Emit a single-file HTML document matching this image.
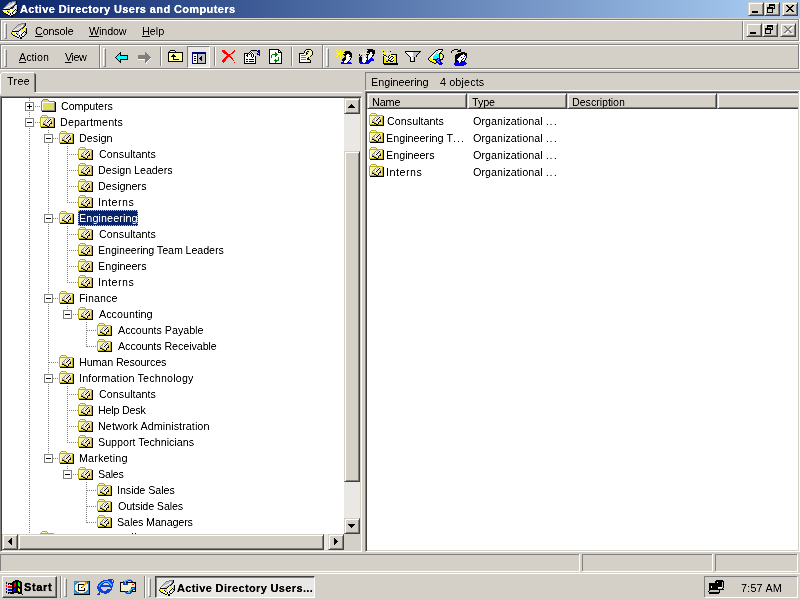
<!DOCTYPE html>
<html><head><meta charset="utf-8"><style>
html,body{margin:0;padding:0;width:800px;height:600px;overflow:hidden;background:#d4d0c8}
.t{position:absolute;white-space:nowrap;font-family:"Liberation Sans",sans-serif;font-size:10.8px;line-height:16px;color:#000;filter:url(#crisp)}
u{text-decoration:underline}
svg{display:block}
</style></head><body>
<svg width="0" height="0" style="position:absolute"><symbol id="folder" viewBox="0 0 17 15"><rect x="4" y="1" width="5" height="1" fill="#808080"/><rect x="3" y="2" width="1" height="1" fill="#808080"/><rect x="4" y="2" width="5" height="1" fill="#e0dc60"/><rect x="9" y="2" width="1" height="1" fill="#808080"/><rect x="2" y="3" width="1" height="1" fill="#808080"/><rect x="3" y="3" width="7" height="1" fill="#e0dc60"/><rect x="10" y="3" width="6" height="1" fill="#808080"/><rect x="2" y="4" width="1" height="1" fill="#808080"/><rect x="3" y="4" width="12" height="1" fill="#ffffff"/><rect x="15" y="4" width="1" height="1" fill="#808080"/><rect x="16" y="4" width="1" height="1" fill="#000000"/><rect x="2" y="5" width="1" height="1" fill="#808080"/><rect x="3" y="5" width="1" height="1" fill="#ffffff"/><rect x="4" y="5" width="11" height="1" fill="#e0dc60"/><rect x="15" y="5" width="1" height="1" fill="#808080"/><rect x="16" y="5" width="1" height="1" fill="#000000"/><rect x="2" y="6" width="1" height="1" fill="#808080"/><rect x="3" y="6" width="1" height="1" fill="#ffffff"/><rect x="4" y="6" width="11" height="1" fill="#e0dc60"/><rect x="15" y="6" width="1" height="1" fill="#808080"/><rect x="16" y="6" width="1" height="1" fill="#000000"/><rect x="2" y="7" width="1" height="1" fill="#808080"/><rect x="3" y="7" width="1" height="1" fill="#ffffff"/><rect x="4" y="7" width="11" height="1" fill="#e0dc60"/><rect x="15" y="7" width="1" height="1" fill="#808080"/><rect x="16" y="7" width="1" height="1" fill="#000000"/><rect x="2" y="8" width="1" height="1" fill="#808080"/><rect x="3" y="8" width="1" height="1" fill="#ffffff"/><rect x="4" y="8" width="11" height="1" fill="#e0dc60"/><rect x="15" y="8" width="1" height="1" fill="#808080"/><rect x="16" y="8" width="1" height="1" fill="#000000"/><rect x="2" y="9" width="1" height="1" fill="#808080"/><rect x="3" y="9" width="1" height="1" fill="#ffffff"/><rect x="4" y="9" width="11" height="1" fill="#e0dc60"/><rect x="15" y="9" width="1" height="1" fill="#808080"/><rect x="16" y="9" width="1" height="1" fill="#000000"/><rect x="2" y="10" width="1" height="1" fill="#808080"/><rect x="3" y="10" width="1" height="1" fill="#ffffff"/><rect x="4" y="10" width="11" height="1" fill="#e0dc60"/><rect x="15" y="10" width="1" height="1" fill="#808080"/><rect x="16" y="10" width="1" height="1" fill="#000000"/><rect x="2" y="11" width="1" height="1" fill="#808080"/><rect x="3" y="11" width="1" height="1" fill="#ffffff"/><rect x="4" y="11" width="11" height="1" fill="#e0dc60"/><rect x="15" y="11" width="1" height="1" fill="#808080"/><rect x="16" y="11" width="1" height="1" fill="#000000"/><rect x="2" y="12" width="14" height="1" fill="#808080"/><rect x="16" y="12" width="1" height="1" fill="#000000"/><rect x="3" y="13" width="14" height="1" fill="#000000"/></symbol><symbol id="ou" viewBox="0 0 16 16"><rect x="3" y="1" width="5" height="1" fill="#b8b018"/><rect x="2" y="2" width="1" height="1" fill="#b8b018"/><rect x="3" y="2" width="2" height="1" fill="#ffffff"/><rect x="5" y="2" width="3" height="1" fill="#f8f4a0"/><rect x="8" y="2" width="1" height="1" fill="#b8b018"/><rect x="1" y="3" width="14" height="1" fill="#b8b018"/><rect x="1" y="4" width="1" height="1" fill="#b8b018"/><rect x="2" y="4" width="1" height="1" fill="#fffcd0"/><rect x="3" y="4" width="5" height="1" fill="#f8f4a0"/><rect x="8" y="4" width="3" height="1" fill="#c0c0c0"/><rect x="11" y="4" width="3" height="1" fill="#f8f4a0"/><rect x="14" y="4" width="1" height="1" fill="#b8b018"/><rect x="15" y="4" width="1" height="1" fill="#000000"/><rect x="1" y="5" width="1" height="1" fill="#b8b018"/><rect x="2" y="5" width="1" height="1" fill="#fffcd0"/><rect x="3" y="5" width="4" height="1" fill="#f8f4a0"/><rect x="7" y="5" width="1" height="1" fill="#808080"/><rect x="8" y="5" width="1" height="1" fill="#ffffff"/><rect x="9" y="5" width="1" height="1" fill="#c0c0c0"/><rect x="10" y="5" width="1" height="1" fill="#ffffff"/><rect x="11" y="5" width="1" height="1" fill="#000000"/><rect x="12" y="5" width="1" height="1" fill="#f8d0a0"/><rect x="13" y="5" width="1" height="1" fill="#f8f4a0"/><rect x="14" y="5" width="1" height="1" fill="#b8b018"/><rect x="15" y="5" width="1" height="1" fill="#000000"/><rect x="1" y="6" width="1" height="1" fill="#b8b018"/><rect x="2" y="6" width="1" height="1" fill="#fffcd0"/><rect x="3" y="6" width="3" height="1" fill="#f8f4a0"/><rect x="6" y="6" width="1" height="1" fill="#808080"/><rect x="7" y="6" width="1" height="1" fill="#ffffff"/><rect x="8" y="6" width="1" height="1" fill="#c0c0c0"/><rect x="9" y="6" width="1" height="1" fill="#ffffff"/><rect x="10" y="6" width="1" height="1" fill="#000000"/><rect x="11" y="6" width="1" height="1" fill="#f8f4a0"/><rect x="12" y="6" width="2" height="1" fill="#f8d0a0"/><rect x="14" y="6" width="1" height="1" fill="#b8b018"/><rect x="15" y="6" width="1" height="1" fill="#000000"/><rect x="1" y="7" width="1" height="1" fill="#b8b018"/><rect x="2" y="7" width="1" height="1" fill="#fffcd0"/><rect x="3" y="7" width="2" height="1" fill="#f8f4a0"/><rect x="5" y="7" width="1" height="1" fill="#808080"/><rect x="6" y="7" width="1" height="1" fill="#c0c0c0"/><rect x="7" y="7" width="2" height="1" fill="#ffffff"/><rect x="9" y="7" width="1" height="1" fill="#000000"/><rect x="10" y="7" width="1" height="1" fill="#f8f4a0"/><rect x="11" y="7" width="1" height="1" fill="#c0c0c0"/><rect x="12" y="7" width="1" height="1" fill="#808080"/><rect x="13" y="7" width="1" height="1" fill="#f8d0a0"/><rect x="14" y="7" width="1" height="1" fill="#b8b018"/><rect x="15" y="7" width="1" height="1" fill="#000000"/><rect x="1" y="8" width="1" height="1" fill="#b8b018"/><rect x="2" y="8" width="1" height="1" fill="#fffcd0"/><rect x="3" y="8" width="1" height="1" fill="#f8f4a0"/><rect x="4" y="8" width="1" height="1" fill="#808080"/><rect x="5" y="8" width="1" height="1" fill="#ffffff"/><rect x="6" y="8" width="1" height="1" fill="#c0c0c0"/><rect x="7" y="8" width="1" height="1" fill="#ffffff"/><rect x="8" y="8" width="1" height="1" fill="#000000"/><rect x="9" y="8" width="1" height="1" fill="#f8f4a0"/><rect x="10" y="8" width="2" height="1" fill="#ffffff"/><rect x="12" y="8" width="1" height="1" fill="#000000"/><rect x="13" y="8" width="1" height="1" fill="#f8d0a0"/><rect x="14" y="8" width="1" height="1" fill="#b8b018"/><rect x="15" y="8" width="1" height="1" fill="#000000"/><rect x="1" y="9" width="1" height="1" fill="#b8b018"/><rect x="2" y="9" width="1" height="1" fill="#fffcd0"/><rect x="3" y="9" width="1" height="1" fill="#f8f4a0"/><rect x="4" y="9" width="1" height="1" fill="#808080"/><rect x="5" y="9" width="1" height="1" fill="#b8b018"/><rect x="6" y="9" width="2" height="1" fill="#f8d0a0"/><rect x="8" y="9" width="1" height="1" fill="#f8f4a0"/><rect x="9" y="9" width="1" height="1" fill="#c0c0c0"/><rect x="10" y="9" width="1" height="1" fill="#ffffff"/><rect x="11" y="9" width="2" height="1" fill="#000000"/><rect x="13" y="9" width="1" height="1" fill="#f8d0a0"/><rect x="14" y="9" width="1" height="1" fill="#b8b018"/><rect x="15" y="9" width="1" height="1" fill="#000000"/><rect x="1" y="10" width="1" height="1" fill="#b8b018"/><rect x="2" y="10" width="1" height="1" fill="#fffcd0"/><rect x="3" y="10" width="1" height="1" fill="#f8f4a0"/><rect x="4" y="10" width="2" height="1" fill="#000000"/><rect x="6" y="10" width="1" height="1" fill="#b8b018"/><rect x="7" y="10" width="1" height="1" fill="#f8d0a0"/><rect x="8" y="10" width="1" height="1" fill="#f8f4a0"/><rect x="9" y="10" width="1" height="1" fill="#ffffff"/><rect x="10" y="10" width="1" height="1" fill="#000000"/><rect x="11" y="10" width="3" height="1" fill="#f8d0a0"/><rect x="14" y="10" width="1" height="1" fill="#b8b018"/><rect x="15" y="10" width="1" height="1" fill="#000000"/><rect x="1" y="11" width="1" height="1" fill="#b8b018"/><rect x="2" y="11" width="1" height="1" fill="#fffcd0"/><rect x="3" y="11" width="1" height="1" fill="#f8d0a0"/><rect x="4" y="11" width="2" height="1" fill="#f8f4a0"/><rect x="6" y="11" width="2" height="1" fill="#000000"/><rect x="8" y="11" width="1" height="1" fill="#b8b018"/><rect x="9" y="11" width="1" height="1" fill="#ffffff"/><rect x="10" y="11" width="1" height="1" fill="#000000"/><rect x="11" y="11" width="2" height="1" fill="#f8d0a0"/><rect x="13" y="11" width="1" height="1" fill="#f8f4a0"/><rect x="14" y="11" width="1" height="1" fill="#b8b018"/><rect x="15" y="11" width="1" height="1" fill="#000000"/><rect x="1" y="12" width="7" height="1" fill="#b8b018"/><rect x="8" y="12" width="2" height="1" fill="#000000"/><rect x="10" y="12" width="5" height="1" fill="#b8b018"/><rect x="15" y="12" width="1" height="1" fill="#000000"/><rect x="2" y="13" width="14" height="1" fill="#000000"/></symbol><filter id="crisp" x="0" y="0" width="100%" height="100%"><feComponentTransfer><feFuncA type="table" tableValues="0 0.08 0.5 0.95 1"/></feComponentTransfer></filter></svg>
<div style="position:absolute;left:0px;top:0px;width:800px;height:18px;background:linear-gradient(to right,#0a246a 0px,#a6caf0 770px)"></div><div style="position:absolute;left:0px;top:18px;width:800px;height:1px;background:#d4d0c8"></div><div class="t" style="left:20px;top:2px;color:#fff;font-weight:bold;font-size:11px;line-height:14px;letter-spacing:0.38px;-webkit-text-stroke:0.2px #fff">Active Directory Users and Computers</div><div style="position:absolute;left:748px;top:2px;width:14px;height:12px;background:#d4d0c8;border:1px solid;border-color:#d4d0c8 #404040 #404040 #d4d0c8;box-shadow:inset 1px 1px #ffffff,inset -1px -1px #808080"></div><div style="position:absolute;left:764px;top:2px;width:14px;height:12px;background:#d4d0c8;border:1px solid;border-color:#d4d0c8 #404040 #404040 #d4d0c8;box-shadow:inset 1px 1px #ffffff,inset -1px -1px #808080"></div><div style="position:absolute;left:782px;top:2px;width:14px;height:12px;background:#d4d0c8;border:1px solid;border-color:#d4d0c8 #404040 #404040 #d4d0c8;box-shadow:inset 1px 1px #ffffff,inset -1px -1px #808080"></div><div style="position:absolute;left:752px;top:11px;width:6px;height:2px;background:#000"></div><div style="position:absolute;left:769px;top:4px;width:6px;height:5px;border:1px solid #000;border-top-width:2px;box-sizing:border-box"></div><div style="position:absolute;left:767px;top:7px;width:6px;height:6px;border:1px solid #000;border-top-width:2px;box-sizing:border-box;background:#d4d0c8"></div><svg style="position:absolute;left:786px;top:5px" width="8" height="7" shape-rendering="crispEdges"><path d="M0 0h2v1h-2zM1 1h2v1h-2zM2 2h4v1h-4zM3 3h2v1h-2zM2 4h4v1h-4zM1 5h2v1h-2zM0 6h2v1h-2zM6 0h2v1h-2zM5 1h2v1h-2zM5 5h2v1h-2zM6 6h2v1h-2z" fill="#000"/></svg><div style="position:absolute;left:0px;top:19px;width:800px;height:23px;background:#d4d0c8"></div><div style="position:absolute;left:0px;top:19px;width:798px;height:1px;background:#808080"></div><div style="position:absolute;left:0px;top:20px;width:798px;height:1px;background:#ffffff"></div><div style="position:absolute;left:0px;top:19px;width:1px;height:22px;background:#808080"></div><div style="position:absolute;left:1px;top:20px;width:1px;height:21px;background:#ffffff"></div><div style="position:absolute;left:0px;top:40px;width:798px;height:1px;background:#808080"></div><div style="position:absolute;left:0px;top:41px;width:800px;height:1px;background:#ffffff"></div><div style="position:absolute;left:4px;top:23px;width:1px;height:14px;border-left:1px solid #ffffff;border-top:1px solid #ffffff;border-right:1px solid #808080;border-bottom:1px solid #808080"></div><div class="t" style="left:35px;top:23px;letter-spacing:-0.15px"><u>C</u>onsole</div><div class="t" style="left:89px;top:23px;letter-spacing:-0.15px"><u>W</u>indow</div><div class="t" style="left:142px;top:23px;"><u>H</u>elp</div><div style="position:absolute;left:742px;top:21px;width:1px;height:19px;background:#808080"></div><div style="position:absolute;left:743px;top:21px;width:1px;height:19px;background:#ffffff"></div><div style="position:absolute;left:798px;top:19px;width:1px;height:22px;background:#808080"></div><div style="position:absolute;left:799px;top:19px;width:1px;height:23px;background:#ffffff"></div><div style="position:absolute;left:746px;top:23px;width:14px;height:12px;background:#d4d0c8;border:1px solid;border-color:#d4d0c8 #404040 #404040 #d4d0c8;box-shadow:inset 1px 1px #ffffff,inset -1px -1px #808080"></div><div style="position:absolute;left:762px;top:23px;width:14px;height:12px;background:#d4d0c8;border:1px solid;border-color:#d4d0c8 #404040 #404040 #d4d0c8;box-shadow:inset 1px 1px #ffffff,inset -1px -1px #808080"></div><div style="position:absolute;left:780px;top:23px;width:14px;height:12px;background:#d4d0c8;border:1px solid;border-color:#d4d0c8 #404040 #404040 #d4d0c8;box-shadow:inset 1px 1px #ffffff,inset -1px -1px #808080"></div><div style="position:absolute;left:750px;top:32px;width:6px;height:2px;background:#000"></div><div style="position:absolute;left:767px;top:25px;width:6px;height:5px;border:1px solid #000;border-top-width:2px;box-sizing:border-box"></div><div style="position:absolute;left:765px;top:28px;width:6px;height:6px;border:1px solid #000;border-top-width:2px;box-sizing:border-box;background:#d4d0c8"></div><svg style="position:absolute;left:784px;top:26px" width="10" height="9" shape-rendering="crispEdges"><path d="M1 1h2v1h-2zM2 2h2v1h-2zM3 3h4v1h-4zM4 4h2v1h-2zM3 5h4v1h-4zM2 6h2v1h-2zM1 7h2v1h-2zM7 1h2v1h-2zM6 2h2v1h-2zM6 6h2v1h-2zM7 7h2v1h-2z" fill="#ffffff"/><path d="M0 0h2v1h-2zM1 1h2v1h-2zM2 2h4v1h-4zM3 3h2v1h-2zM2 4h4v1h-4zM1 5h2v1h-2zM0 6h2v1h-2zM6 0h2v1h-2zM5 1h2v1h-2zM5 5h2v1h-2zM6 6h2v1h-2z" fill="#808080"/></svg><div style="position:absolute;left:0px;top:42px;width:800px;height:30px;background:#d4d0c8"></div><div style="position:absolute;left:0px;top:44px;width:798px;height:1px;background:#808080"></div><div style="position:absolute;left:0px;top:45px;width:798px;height:1px;background:#ffffff"></div><div style="position:absolute;left:0px;top:44px;width:1px;height:25px;background:#808080"></div><div style="position:absolute;left:1px;top:45px;width:1px;height:24px;background:#ffffff"></div><div style="position:absolute;left:0px;top:68px;width:798px;height:1px;background:#808080"></div><div style="position:absolute;left:0px;top:69px;width:800px;height:1px;background:#ffffff"></div><div style="position:absolute;left:798px;top:44px;width:1px;height:25px;background:#808080"></div><div style="position:absolute;left:799px;top:44px;width:1px;height:26px;background:#ffffff"></div><div style="position:absolute;left:4px;top:49px;width:1px;height:16px;border-left:1px solid #ffffff;border-top:1px solid #ffffff;border-right:1px solid #808080;border-bottom:1px solid #808080"></div><div class="t" style="left:19px;top:49px;"><u>A</u>ction</div><div class="t" style="left:65px;top:49px;letter-spacing:-0.5px"><u>V</u>iew</div><div style="position:absolute;left:99px;top:45px;width:1px;height:23px;background:#808080"></div><div style="position:absolute;left:100px;top:45px;width:1px;height:23px;background:#ffffff"></div><div style="position:absolute;left:103px;top:48px;width:1px;height:17px;border-left:1px solid #ffffff;border-top:1px solid #ffffff;border-right:1px solid #808080;border-bottom:1px solid #808080"></div><div style="position:absolute;left:322px;top:45px;width:1px;height:23px;background:#808080"></div><div style="position:absolute;left:323px;top:45px;width:1px;height:23px;background:#ffffff"></div><div style="position:absolute;left:326px;top:48px;width:1px;height:17px;border-left:1px solid #ffffff;border-top:1px solid #ffffff;border-right:1px solid #808080;border-bottom:1px solid #808080"></div><div style="position:absolute;left:160px;top:47px;width:1px;height:19px;background:#808080"></div><div style="position:absolute;left:161px;top:47px;width:1px;height:19px;background:#ffffff"></div><div style="position:absolute;left:214px;top:47px;width:1px;height:19px;background:#808080"></div><div style="position:absolute;left:215px;top:47px;width:1px;height:19px;background:#ffffff"></div><div style="position:absolute;left:291px;top:47px;width:1px;height:19px;background:#808080"></div><div style="position:absolute;left:292px;top:47px;width:1px;height:19px;background:#ffffff"></div><div style="position:absolute;left:115px;top:52px"><svg width="13" height="11" viewBox="0 0 13 11" shape-rendering="crispEdges" style="display:block"><rect x="5" y="0" width="1" height="1" fill="#000000"/><rect x="4" y="1" width="2" height="1" fill="#000000"/><rect x="3" y="2" width="1" height="1" fill="#000000"/><rect x="4" y="2" width="1" height="1" fill="#00ffff"/><rect x="5" y="2" width="1" height="1" fill="#000000"/><rect x="2" y="3" width="1" height="1" fill="#000000"/><rect x="3" y="3" width="2" height="1" fill="#00ffff"/><rect x="5" y="3" width="8" height="1" fill="#000000"/><rect x="1" y="4" width="1" height="1" fill="#000000"/><rect x="2" y="4" width="10" height="1" fill="#00ffff"/><rect x="12" y="4" width="1" height="1" fill="#000000"/><rect x="0" y="5" width="1" height="1" fill="#000000"/><rect x="1" y="5" width="11" height="1" fill="#00ffff"/><rect x="12" y="5" width="1" height="1" fill="#000000"/><rect x="1" y="6" width="1" height="1" fill="#000000"/><rect x="2" y="6" width="10" height="1" fill="#00ffff"/><rect x="12" y="6" width="1" height="1" fill="#000000"/><rect x="2" y="7" width="1" height="1" fill="#000000"/><rect x="3" y="7" width="2" height="1" fill="#00ffff"/><rect x="5" y="7" width="8" height="1" fill="#000000"/><rect x="3" y="8" width="1" height="1" fill="#000000"/><rect x="4" y="8" width="1" height="1" fill="#00ffff"/><rect x="5" y="8" width="1" height="1" fill="#000000"/><rect x="4" y="9" width="2" height="1" fill="#000000"/><rect x="5" y="10" width="1" height="1" fill="#000000"/></svg></div><div style="position:absolute;left:138px;top:52px"><svg width="14" height="12" viewBox="0 0 14 12" shape-rendering="crispEdges" style="display:block"><rect x="7" y="0" width="1" height="1" fill="#808080"/><rect x="7" y="1" width="2" height="1" fill="#808080"/><rect x="7" y="2" width="3" height="1" fill="#808080"/><rect x="0" y="3" width="11" height="1" fill="#808080"/><rect x="0" y="4" width="12" height="1" fill="#808080"/><rect x="0" y="5" width="13" height="1" fill="#808080"/><rect x="0" y="6" width="12" height="1" fill="#808080"/><rect x="12" y="6" width="1" height="1" fill="#ffffff"/><rect x="0" y="7" width="7" height="1" fill="#ffffff"/><rect x="7" y="7" width="4" height="1" fill="#808080"/><rect x="11" y="7" width="1" height="1" fill="#ffffff"/><rect x="7" y="8" width="3" height="1" fill="#808080"/><rect x="10" y="8" width="1" height="1" fill="#ffffff"/><rect x="7" y="9" width="2" height="1" fill="#808080"/><rect x="9" y="9" width="1" height="1" fill="#ffffff"/><rect x="7" y="10" width="1" height="1" fill="#808080"/><rect x="8" y="10" width="1" height="1" fill="#ffffff"/><rect x="8" y="11" width="1" height="1" fill="#ffffff"/></svg></div><div style="position:absolute;left:168px;top:50px"><svg width="15" height="12" viewBox="0 0 15 12" shape-rendering="crispEdges" style="display:block"><rect x="2" y="0" width="5" height="1" fill="#000000"/><rect x="1" y="1" width="1" height="1" fill="#000000"/><rect x="2" y="1" width="1" height="1" fill="#ffff00"/><rect x="3" y="1" width="1" height="1" fill="#ffffff"/><rect x="4" y="1" width="1" height="1" fill="#ffff00"/><rect x="5" y="1" width="1" height="1" fill="#ffffff"/><rect x="6" y="1" width="1" height="1" fill="#ffff00"/><rect x="7" y="1" width="1" height="1" fill="#000000"/><rect x="0" y="2" width="15" height="1" fill="#000000"/><rect x="0" y="3" width="1" height="1" fill="#000000"/><rect x="1" y="3" width="13" height="1" fill="#ffff99"/><rect x="14" y="3" width="1" height="1" fill="#000000"/><rect x="0" y="4" width="1" height="1" fill="#000000"/><rect x="1" y="4" width="4" height="1" fill="#ffff99"/><rect x="5" y="4" width="1" height="1" fill="#000000"/><rect x="6" y="4" width="8" height="1" fill="#ffff99"/><rect x="14" y="4" width="1" height="1" fill="#000000"/><rect x="0" y="5" width="1" height="1" fill="#000000"/><rect x="1" y="5" width="3" height="1" fill="#ffff99"/><rect x="4" y="5" width="3" height="1" fill="#000000"/><rect x="7" y="5" width="7" height="1" fill="#ffff99"/><rect x="14" y="5" width="1" height="1" fill="#000000"/><rect x="0" y="6" width="1" height="1" fill="#000000"/><rect x="1" y="6" width="2" height="1" fill="#ffff99"/><rect x="3" y="6" width="5" height="1" fill="#000000"/><rect x="8" y="6" width="6" height="1" fill="#ffff99"/><rect x="14" y="6" width="1" height="1" fill="#000000"/><rect x="0" y="7" width="1" height="1" fill="#000000"/><rect x="1" y="7" width="4" height="1" fill="#ffff99"/><rect x="5" y="7" width="1" height="1" fill="#000000"/><rect x="6" y="7" width="8" height="1" fill="#ffff99"/><rect x="14" y="7" width="1" height="1" fill="#000000"/><rect x="0" y="8" width="1" height="1" fill="#000000"/><rect x="1" y="8" width="4" height="1" fill="#ffff99"/><rect x="5" y="8" width="1" height="1" fill="#000000"/><rect x="6" y="8" width="8" height="1" fill="#ffff99"/><rect x="14" y="8" width="1" height="1" fill="#000000"/><rect x="0" y="9" width="1" height="1" fill="#000000"/><rect x="1" y="9" width="4" height="1" fill="#ffff99"/><rect x="5" y="9" width="6" height="1" fill="#000000"/><rect x="11" y="9" width="3" height="1" fill="#ffff99"/><rect x="14" y="9" width="1" height="1" fill="#000000"/><rect x="0" y="10" width="1" height="1" fill="#000000"/><rect x="1" y="10" width="13" height="1" fill="#ffff99"/><rect x="14" y="10" width="1" height="1" fill="#000000"/><rect x="0" y="11" width="15" height="1" fill="#000000"/></svg></div><div style="position:absolute;left:187px;top:46px;width:21px;height:20px;background:#eae8e4;border-top:1px solid #808080;border-left:1px solid #808080;border-right:1px solid #ffffff;border-bottom:1px solid #ffffff"></div><div style="position:absolute;left:192px;top:52px"><svg width="14" height="12" viewBox="0 0 14 12" shape-rendering="crispEdges" style="display:block"><rect x="0" y="0" width="14" height="1" fill="#000080"/><rect x="0" y="1" width="14" height="1" fill="#000080"/><rect x="0" y="2" width="1" height="1" fill="#000080"/><rect x="1" y="2" width="4" height="1" fill="#ffffff"/><rect x="5" y="2" width="1" height="1" fill="#000080"/><rect x="6" y="2" width="7" height="1" fill="#c0c0c0"/><rect x="13" y="2" width="1" height="1" fill="#000080"/><rect x="0" y="3" width="1" height="1" fill="#000080"/><rect x="1" y="3" width="4" height="1" fill="#ffffff"/><rect x="5" y="3" width="1" height="1" fill="#000080"/><rect x="6" y="3" width="7" height="1" fill="#c0c0c0"/><rect x="13" y="3" width="1" height="1" fill="#000080"/><rect x="0" y="4" width="1" height="1" fill="#000080"/><rect x="1" y="4" width="1" height="1" fill="#ffffff"/><rect x="2" y="4" width="2" height="1" fill="#000000"/><rect x="4" y="4" width="1" height="1" fill="#ffffff"/><rect x="5" y="4" width="1" height="1" fill="#000080"/><rect x="6" y="4" width="3" height="1" fill="#c0c0c0"/><rect x="9" y="4" width="1" height="1" fill="#000000"/><rect x="10" y="4" width="3" height="1" fill="#c0c0c0"/><rect x="13" y="4" width="1" height="1" fill="#000080"/><rect x="0" y="5" width="1" height="1" fill="#000080"/><rect x="1" y="5" width="4" height="1" fill="#ffffff"/><rect x="5" y="5" width="1" height="1" fill="#000080"/><rect x="6" y="5" width="2" height="1" fill="#c0c0c0"/><rect x="8" y="5" width="2" height="1" fill="#000000"/><rect x="10" y="5" width="3" height="1" fill="#c0c0c0"/><rect x="13" y="5" width="1" height="1" fill="#000080"/><rect x="0" y="6" width="1" height="1" fill="#000080"/><rect x="1" y="6" width="1" height="1" fill="#ffffff"/><rect x="2" y="6" width="2" height="1" fill="#000000"/><rect x="4" y="6" width="1" height="1" fill="#ffffff"/><rect x="5" y="6" width="1" height="1" fill="#000080"/><rect x="6" y="6" width="1" height="1" fill="#c0c0c0"/><rect x="7" y="6" width="3" height="1" fill="#000000"/><rect x="10" y="6" width="3" height="1" fill="#c0c0c0"/><rect x="13" y="6" width="1" height="1" fill="#000080"/><rect x="0" y="7" width="1" height="1" fill="#000080"/><rect x="1" y="7" width="4" height="1" fill="#ffffff"/><rect x="5" y="7" width="1" height="1" fill="#000080"/><rect x="6" y="7" width="2" height="1" fill="#c0c0c0"/><rect x="8" y="7" width="2" height="1" fill="#000000"/><rect x="10" y="7" width="3" height="1" fill="#c0c0c0"/><rect x="13" y="7" width="1" height="1" fill="#000080"/><rect x="0" y="8" width="1" height="1" fill="#000080"/><rect x="1" y="8" width="1" height="1" fill="#ffffff"/><rect x="2" y="8" width="2" height="1" fill="#000000"/><rect x="4" y="8" width="1" height="1" fill="#ffffff"/><rect x="5" y="8" width="1" height="1" fill="#000080"/><rect x="6" y="8" width="3" height="1" fill="#c0c0c0"/><rect x="9" y="8" width="1" height="1" fill="#000000"/><rect x="10" y="8" width="3" height="1" fill="#c0c0c0"/><rect x="13" y="8" width="1" height="1" fill="#000080"/><rect x="0" y="9" width="1" height="1" fill="#000080"/><rect x="1" y="9" width="4" height="1" fill="#ffffff"/><rect x="5" y="9" width="1" height="1" fill="#000080"/><rect x="6" y="9" width="7" height="1" fill="#c0c0c0"/><rect x="13" y="9" width="1" height="1" fill="#000080"/><rect x="0" y="10" width="1" height="1" fill="#000080"/><rect x="1" y="10" width="4" height="1" fill="#ffffff"/><rect x="5" y="10" width="1" height="1" fill="#000080"/><rect x="6" y="10" width="7" height="1" fill="#c0c0c0"/><rect x="13" y="10" width="1" height="1" fill="#000080"/><rect x="0" y="11" width="14" height="1" fill="#000080"/></svg></div><div style="position:absolute;left:220px;top:48px"><svg width="16" height="15" viewBox="0 0 16 15" shape-rendering="crispEdges" style="display:block"><rect x="2" y="2" width="3" height="1" fill="#ff0000"/><rect x="14" y="2" width="1" height="1" fill="#ff0000"/><rect x="2" y="3" width="4" height="1" fill="#ff0000"/><rect x="13" y="3" width="2" height="1" fill="#ff0000"/><rect x="3" y="4" width="4" height="1" fill="#ff0000"/><rect x="12" y="4" width="2" height="1" fill="#ff0000"/><rect x="4" y="5" width="4" height="1" fill="#ff0000"/><rect x="11" y="5" width="2" height="1" fill="#ff0000"/><rect x="6" y="6" width="5" height="1" fill="#ff0000"/><rect x="7" y="7" width="3" height="1" fill="#ff0000"/><rect x="6" y="8" width="5" height="1" fill="#ff0000"/><rect x="5" y="9" width="3" height="1" fill="#ff0000"/><rect x="10" y="9" width="2" height="1" fill="#ff0000"/><rect x="4" y="10" width="3" height="1" fill="#ff0000"/><rect x="11" y="10" width="2" height="1" fill="#ff0000"/><rect x="3" y="11" width="3" height="1" fill="#ff0000"/><rect x="12" y="11" width="1" height="1" fill="#ff0000"/><rect x="2" y="12" width="4" height="1" fill="#ff0000"/><rect x="13" y="12" width="1" height="1" fill="#ff0000"/><rect x="2" y="13" width="3" height="1" fill="#ff0000"/><rect x="3" y="14" width="1" height="1" fill="#ff0000"/><rect x="14" y="14" width="1" height="1" fill="#ff0000"/></svg></div><div style="position:absolute;left:242px;top:48px"><svg width="18" height="16" viewBox="0 0 18 16" shape-rendering="crispEdges" style="display:block"><rect x="9" y="2" width="6" height="1" fill="#000000"/><rect x="16" y="2" width="2" height="1" fill="#000080"/><rect x="8" y="3" width="1" height="1" fill="#000000"/><rect x="9" y="3" width="1" height="1" fill="#ffffff"/><rect x="10" y="3" width="5" height="1" fill="#c0c0c0"/><rect x="15" y="3" width="1" height="1" fill="#000000"/><rect x="16" y="3" width="2" height="1" fill="#000080"/><rect x="7" y="4" width="1" height="1" fill="#000000"/><rect x="8" y="4" width="1" height="1" fill="#ffffff"/><rect x="9" y="4" width="1" height="1" fill="#000000"/><rect x="10" y="4" width="1" height="1" fill="#ffffff"/><rect x="11" y="4" width="4" height="1" fill="#c0c0c0"/><rect x="16" y="4" width="2" height="1" fill="#000080"/><rect x="2" y="5" width="5" height="1" fill="#000000"/><rect x="7" y="5" width="1" height="1" fill="#ffffff"/><rect x="8" y="5" width="1" height="1" fill="#000000"/><rect x="9" y="5" width="1" height="1" fill="#ffffff"/><rect x="10" y="5" width="1" height="1" fill="#000000"/><rect x="11" y="5" width="1" height="1" fill="#ffffff"/><rect x="12" y="5" width="3" height="1" fill="#c0c0c0"/><rect x="15" y="5" width="1" height="1" fill="#000000"/><rect x="17" y="5" width="1" height="1" fill="#000080"/><rect x="2" y="6" width="1" height="1" fill="#000000"/><rect x="3" y="6" width="2" height="1" fill="#ffffff"/><rect x="5" y="6" width="1" height="1" fill="#000000"/><rect x="6" y="6" width="1" height="1" fill="#ffffff"/><rect x="7" y="6" width="1" height="1" fill="#000000"/><rect x="8" y="6" width="1" height="1" fill="#ffffff"/><rect x="9" y="6" width="1" height="1" fill="#000000"/><rect x="10" y="6" width="1" height="1" fill="#ffffff"/><rect x="11" y="6" width="1" height="1" fill="#000000"/><rect x="12" y="6" width="1" height="1" fill="#ffffff"/><rect x="15" y="6" width="1" height="1" fill="#000000"/><rect x="16" y="6" width="2" height="1" fill="#000080"/><rect x="2" y="7" width="1" height="1" fill="#000000"/><rect x="3" y="7" width="1" height="1" fill="#ffffff"/><rect x="4" y="7" width="2" height="1" fill="#000000"/><rect x="6" y="7" width="3" height="1" fill="#ffffff"/><rect x="9" y="7" width="1" height="1" fill="#000000"/><rect x="10" y="7" width="1" height="1" fill="#ffffff"/><rect x="11" y="7" width="1" height="1" fill="#000000"/><rect x="12" y="7" width="1" height="1" fill="#ffffff"/><rect x="17" y="7" width="1" height="1" fill="#000080"/><rect x="2" y="8" width="1" height="1" fill="#000000"/><rect x="3" y="8" width="2" height="1" fill="#ffffff"/><rect x="5" y="8" width="1" height="1" fill="#000000"/><rect x="6" y="8" width="3" height="1" fill="#ffffff"/><rect x="9" y="8" width="1" height="1" fill="#000000"/><rect x="10" y="8" width="1" height="1" fill="#ffffff"/><rect x="11" y="8" width="1" height="1" fill="#000000"/><rect x="12" y="8" width="1" height="1" fill="#ffffff"/><rect x="13" y="8" width="1" height="1" fill="#000000"/><rect x="2" y="9" width="1" height="1" fill="#000000"/><rect x="3" y="9" width="7" height="1" fill="#ffffff"/><rect x="10" y="9" width="1" height="1" fill="#000000"/><rect x="11" y="9" width="2" height="1" fill="#ffffff"/><rect x="13" y="9" width="1" height="1" fill="#000000"/><rect x="2" y="10" width="1" height="1" fill="#000000"/><rect x="3" y="10" width="10" height="1" fill="#ffffff"/><rect x="13" y="10" width="1" height="1" fill="#000000"/><rect x="2" y="11" width="1" height="1" fill="#000000"/><rect x="3" y="11" width="1" height="1" fill="#ffffff"/><rect x="4" y="11" width="2" height="1" fill="#000000"/><rect x="6" y="11" width="1" height="1" fill="#ffffff"/><rect x="7" y="11" width="5" height="1" fill="#000000"/><rect x="12" y="11" width="1" height="1" fill="#ffffff"/><rect x="13" y="11" width="1" height="1" fill="#000000"/><rect x="2" y="12" width="1" height="1" fill="#000000"/><rect x="3" y="12" width="10" height="1" fill="#ffffff"/><rect x="13" y="12" width="1" height="1" fill="#000000"/><rect x="2" y="13" width="1" height="1" fill="#000000"/><rect x="3" y="13" width="1" height="1" fill="#ffffff"/><rect x="4" y="13" width="2" height="1" fill="#000000"/><rect x="6" y="13" width="1" height="1" fill="#ffffff"/><rect x="7" y="13" width="5" height="1" fill="#000000"/><rect x="12" y="13" width="1" height="1" fill="#ffffff"/><rect x="13" y="13" width="1" height="1" fill="#000000"/><rect x="2" y="14" width="1" height="1" fill="#000000"/><rect x="3" y="14" width="10" height="1" fill="#ffffff"/><rect x="13" y="14" width="1" height="1" fill="#000000"/><rect x="2" y="15" width="12" height="1" fill="#000000"/></svg></div><div style="position:absolute;left:268px;top:48px"><svg width="16" height="16" viewBox="0 0 16 16" shape-rendering="crispEdges" style="display:block"><rect x="1" y="1" width="10" height="1" fill="#000000"/><rect x="1" y="2" width="1" height="1" fill="#000000"/><rect x="2" y="2" width="8" height="1" fill="#ffffff"/><rect x="10" y="2" width="2" height="1" fill="#000000"/><rect x="1" y="3" width="1" height="1" fill="#000000"/><rect x="2" y="3" width="8" height="1" fill="#ffffff"/><rect x="10" y="3" width="1" height="1" fill="#000000"/><rect x="11" y="3" width="1" height="1" fill="#ffffff"/><rect x="12" y="3" width="1" height="1" fill="#000000"/><rect x="1" y="4" width="1" height="1" fill="#000000"/><rect x="2" y="4" width="5" height="1" fill="#ffffff"/><rect x="7" y="4" width="1" height="1" fill="#008000"/><rect x="8" y="4" width="2" height="1" fill="#ffffff"/><rect x="10" y="4" width="4" height="1" fill="#000000"/><rect x="1" y="5" width="1" height="1" fill="#000000"/><rect x="2" y="5" width="5" height="1" fill="#ffffff"/><rect x="7" y="5" width="2" height="1" fill="#008000"/><rect x="9" y="5" width="4" height="1" fill="#ffffff"/><rect x="13" y="5" width="1" height="1" fill="#000000"/><rect x="1" y="6" width="1" height="1" fill="#000000"/><rect x="2" y="6" width="2" height="1" fill="#ffffff"/><rect x="4" y="6" width="6" height="1" fill="#008000"/><rect x="10" y="6" width="3" height="1" fill="#ffffff"/><rect x="13" y="6" width="1" height="1" fill="#000000"/><rect x="1" y="7" width="1" height="1" fill="#000000"/><rect x="2" y="7" width="1" height="1" fill="#ffffff"/><rect x="3" y="7" width="1" height="1" fill="#008000"/><rect x="4" y="7" width="3" height="1" fill="#ffffff"/><rect x="7" y="7" width="2" height="1" fill="#008000"/><rect x="9" y="7" width="4" height="1" fill="#ffffff"/><rect x="13" y="7" width="1" height="1" fill="#000000"/><rect x="1" y="8" width="1" height="1" fill="#000000"/><rect x="2" y="8" width="1" height="1" fill="#ffffff"/><rect x="3" y="8" width="1" height="1" fill="#008000"/><rect x="4" y="8" width="3" height="1" fill="#ffffff"/><rect x="7" y="8" width="1" height="1" fill="#008000"/><rect x="8" y="8" width="5" height="1" fill="#ffffff"/><rect x="13" y="8" width="1" height="1" fill="#000000"/><rect x="1" y="9" width="1" height="1" fill="#000000"/><rect x="2" y="9" width="1" height="1" fill="#ffffff"/><rect x="3" y="9" width="1" height="1" fill="#008000"/><rect x="4" y="9" width="6" height="1" fill="#ffffff"/><rect x="10" y="9" width="1" height="1" fill="#008000"/><rect x="11" y="9" width="2" height="1" fill="#ffffff"/><rect x="13" y="9" width="1" height="1" fill="#000000"/><rect x="1" y="10" width="1" height="1" fill="#000000"/><rect x="2" y="10" width="8" height="1" fill="#ffffff"/><rect x="10" y="10" width="1" height="1" fill="#008000"/><rect x="11" y="10" width="2" height="1" fill="#ffffff"/><rect x="13" y="10" width="1" height="1" fill="#000000"/><rect x="1" y="11" width="1" height="1" fill="#000000"/><rect x="2" y="11" width="5" height="1" fill="#ffffff"/><rect x="7" y="11" width="1" height="1" fill="#008000"/><rect x="8" y="11" width="2" height="1" fill="#ffffff"/><rect x="10" y="11" width="1" height="1" fill="#008000"/><rect x="11" y="11" width="2" height="1" fill="#ffffff"/><rect x="13" y="11" width="1" height="1" fill="#000000"/><rect x="1" y="12" width="1" height="1" fill="#000000"/><rect x="2" y="12" width="4" height="1" fill="#ffffff"/><rect x="6" y="12" width="5" height="1" fill="#008000"/><rect x="11" y="12" width="2" height="1" fill="#ffffff"/><rect x="13" y="12" width="1" height="1" fill="#000000"/><rect x="1" y="13" width="1" height="1" fill="#000000"/><rect x="2" y="13" width="5" height="1" fill="#ffffff"/><rect x="7" y="13" width="2" height="1" fill="#008000"/><rect x="9" y="13" width="4" height="1" fill="#ffffff"/><rect x="13" y="13" width="1" height="1" fill="#000000"/><rect x="1" y="14" width="1" height="1" fill="#000000"/><rect x="2" y="14" width="5" height="1" fill="#ffffff"/><rect x="7" y="14" width="1" height="1" fill="#008000"/><rect x="8" y="14" width="5" height="1" fill="#ffffff"/><rect x="13" y="14" width="1" height="1" fill="#000000"/><rect x="1" y="15" width="13" height="1" fill="#000000"/></svg></div><div style="position:absolute;left:296px;top:46px"><svg width="17" height="17" viewBox="0 0 17 17" shape-rendering="crispEdges" style="display:block"><rect x="10" y="3" width="5" height="1" fill="#000000"/><rect x="9" y="4" width="1" height="1" fill="#000000"/><rect x="10" y="4" width="1" height="1" fill="#ffffff"/><rect x="11" y="4" width="4" height="1" fill="#f8f4a0"/><rect x="15" y="4" width="1" height="1" fill="#000000"/><rect x="8" y="5" width="1" height="1" fill="#000000"/><rect x="9" y="5" width="2" height="1" fill="#f8f4a0"/><rect x="11" y="5" width="2" height="1" fill="#000000"/><rect x="13" y="5" width="3" height="1" fill="#f8f4a0"/><rect x="16" y="5" width="1" height="1" fill="#000000"/><rect x="8" y="6" width="1" height="1" fill="#000000"/><rect x="9" y="6" width="1" height="1" fill="#f8f4a0"/><rect x="10" y="6" width="1" height="1" fill="#000000"/><rect x="13" y="6" width="3" height="1" fill="#f8f4a0"/><rect x="16" y="6" width="1" height="1" fill="#000000"/><rect x="3" y="7" width="5" height="1" fill="#000000"/><rect x="8" y="7" width="2" height="1" fill="#f8f4a0"/><rect x="10" y="7" width="2" height="1" fill="#000000"/><rect x="12" y="7" width="1" height="1" fill="#ffffff"/><rect x="13" y="7" width="3" height="1" fill="#f8f4a0"/><rect x="16" y="7" width="1" height="1" fill="#000000"/><rect x="3" y="8" width="1" height="1" fill="#000000"/><rect x="4" y="8" width="6" height="1" fill="#ffffff"/><rect x="10" y="8" width="1" height="1" fill="#000000"/><rect x="12" y="8" width="4" height="1" fill="#f8f4a0"/><rect x="16" y="8" width="1" height="1" fill="#000000"/><rect x="3" y="9" width="1" height="1" fill="#000000"/><rect x="4" y="9" width="1" height="1" fill="#ffffff"/><rect x="5" y="9" width="5" height="1" fill="#808080"/><rect x="10" y="9" width="1" height="1" fill="#ffffff"/><rect x="11" y="9" width="4" height="1" fill="#f8f4a0"/><rect x="15" y="9" width="1" height="1" fill="#000000"/><rect x="3" y="10" width="1" height="1" fill="#000000"/><rect x="4" y="10" width="6" height="1" fill="#ffffff"/><rect x="10" y="10" width="4" height="1" fill="#f8f4a0"/><rect x="14" y="10" width="1" height="1" fill="#000000"/><rect x="3" y="11" width="1" height="1" fill="#000000"/><rect x="4" y="11" width="1" height="1" fill="#ffffff"/><rect x="5" y="11" width="5" height="1" fill="#808080"/><rect x="10" y="11" width="2" height="1" fill="#f8f4a0"/><rect x="12" y="11" width="1" height="1" fill="#000000"/><rect x="3" y="12" width="1" height="1" fill="#000000"/><rect x="4" y="12" width="7" height="1" fill="#ffffff"/><rect x="11" y="12" width="2" height="1" fill="#000000"/><rect x="3" y="13" width="1" height="1" fill="#000000"/><rect x="4" y="13" width="1" height="1" fill="#ffffff"/><rect x="5" y="13" width="5" height="1" fill="#808080"/><rect x="10" y="13" width="1" height="1" fill="#ffffff"/><rect x="11" y="13" width="3" height="1" fill="#000000"/><rect x="3" y="14" width="1" height="1" fill="#000000"/><rect x="4" y="14" width="7" height="1" fill="#ffffff"/><rect x="11" y="14" width="3" height="1" fill="#f8f4a0"/><rect x="14" y="14" width="1" height="1" fill="#000000"/><rect x="3" y="15" width="1" height="1" fill="#000000"/><rect x="4" y="15" width="7" height="1" fill="#ffffff"/><rect x="11" y="15" width="3" height="1" fill="#f8f4a0"/><rect x="14" y="15" width="1" height="1" fill="#000000"/><rect x="3" y="16" width="12" height="1" fill="#000000"/></svg></div><div style="position:absolute;left:334px;top:46px"><svg width="18" height="18" viewBox="0 0 18 18" shape-rendering="crispEdges" style="display:block"><rect x="6" y="3" width="1" height="1" fill="#ffff00"/><rect x="2" y="4" width="1" height="1" fill="#ffff00"/><rect x="6" y="4" width="1" height="1" fill="#ffff00"/><rect x="10" y="4" width="1" height="1" fill="#ffff00"/><rect x="3" y="5" width="1" height="1" fill="#ffff00"/><rect x="6" y="5" width="1" height="1" fill="#ffff00"/><rect x="9" y="5" width="1" height="1" fill="#ffff00"/><rect x="11" y="5" width="5" height="1" fill="#000000"/><rect x="4" y="6" width="1" height="1" fill="#ffff00"/><rect x="6" y="6" width="1" height="1" fill="#ffff00"/><rect x="8" y="6" width="1" height="1" fill="#ffff00"/><rect x="10" y="6" width="7" height="1" fill="#000000"/><rect x="2" y="7" width="9" height="1" fill="#ffff00"/><rect x="11" y="7" width="7" height="1" fill="#000000"/><rect x="4" y="8" width="1" height="1" fill="#ffff00"/><rect x="6" y="8" width="1" height="1" fill="#ffff00"/><rect x="8" y="8" width="1" height="1" fill="#ffff00"/><rect x="9" y="8" width="4" height="1" fill="#000000"/><rect x="13" y="8" width="2" height="1" fill="#ffffff"/><rect x="15" y="8" width="3" height="1" fill="#000000"/><rect x="3" y="9" width="1" height="1" fill="#ffff00"/><rect x="6" y="9" width="1" height="1" fill="#ffff00"/><rect x="9" y="9" width="1" height="1" fill="#ffff00"/><rect x="10" y="9" width="2" height="1" fill="#000000"/><rect x="12" y="9" width="4" height="1" fill="#ffffff"/><rect x="16" y="9" width="2" height="1" fill="#000000"/><rect x="2" y="10" width="1" height="1" fill="#ffff00"/><rect x="6" y="10" width="1" height="1" fill="#ffff00"/><rect x="10" y="10" width="1" height="1" fill="#ffff00"/><rect x="11" y="10" width="1" height="1" fill="#000000"/><rect x="12" y="10" width="3" height="1" fill="#ffffff"/><rect x="15" y="10" width="1" height="1" fill="#0000ff"/><rect x="16" y="10" width="2" height="1" fill="#000000"/><rect x="6" y="11" width="1" height="1" fill="#ffff00"/><rect x="10" y="11" width="2" height="1" fill="#000000"/><rect x="12" y="11" width="5" height="1" fill="#ffffff"/><rect x="17" y="11" width="1" height="1" fill="#000000"/><rect x="6" y="12" width="1" height="1" fill="#ffff00"/><rect x="9" y="12" width="3" height="1" fill="#000000"/><rect x="12" y="12" width="4" height="1" fill="#ffffff"/><rect x="16" y="12" width="1" height="1" fill="#000000"/><rect x="6" y="13" width="1" height="1" fill="#ffff00"/><rect x="8" y="13" width="4" height="1" fill="#000000"/><rect x="12" y="13" width="4" height="1" fill="#ffffff"/><rect x="16" y="13" width="1" height="1" fill="#000000"/><rect x="8" y="14" width="3" height="1" fill="#000000"/><rect x="11" y="14" width="4" height="1" fill="#ffffff"/><rect x="15" y="14" width="1" height="1" fill="#000000"/><rect x="9" y="15" width="1" height="1" fill="#000000"/><rect x="10" y="15" width="4" height="1" fill="#ffffff"/><rect x="14" y="15" width="1" height="1" fill="#000000"/><rect x="7" y="16" width="3" height="1" fill="#0000ff"/><rect x="10" y="16" width="3" height="1" fill="#ffffff"/><rect x="13" y="16" width="4" height="1" fill="#0000ff"/><rect x="7" y="17" width="11" height="1" fill="#0000ff"/></svg></div><div style="position:absolute;left:356px;top:46px"><svg width="19" height="18" viewBox="0 0 19 18" shape-rendering="crispEdges" style="display:block"><rect x="7" y="3" width="1" height="1" fill="#ffff00"/><rect x="11" y="3" width="6" height="1" fill="#000000"/><rect x="3" y="4" width="1" height="1" fill="#ffff00"/><rect x="7" y="4" width="1" height="1" fill="#ffff00"/><rect x="11" y="4" width="1" height="1" fill="#ffff00"/><rect x="12" y="4" width="7" height="1" fill="#000000"/><rect x="4" y="5" width="1" height="1" fill="#ffff00"/><rect x="7" y="5" width="1" height="1" fill="#ffff00"/><rect x="10" y="5" width="1" height="1" fill="#ffff00"/><rect x="11" y="5" width="8" height="1" fill="#000000"/><rect x="5" y="6" width="1" height="1" fill="#ffff00"/><rect x="7" y="6" width="1" height="1" fill="#ffff00"/><rect x="9" y="6" width="1" height="1" fill="#ffff00"/><rect x="11" y="6" width="3" height="1" fill="#000000"/><rect x="14" y="6" width="2" height="1" fill="#ffffff"/><rect x="16" y="6" width="3" height="1" fill="#000000"/><rect x="3" y="7" width="10" height="1" fill="#ffff00"/><rect x="13" y="7" width="1" height="1" fill="#000000"/><rect x="14" y="7" width="2" height="1" fill="#ffffff"/><rect x="16" y="7" width="1" height="1" fill="#0000ff"/><rect x="17" y="7" width="2" height="1" fill="#000000"/><rect x="3" y="8" width="1" height="1" fill="#000000"/><rect x="5" y="8" width="1" height="1" fill="#ffff00"/><rect x="7" y="8" width="1" height="1" fill="#ffff00"/><rect x="9" y="8" width="1" height="1" fill="#ffff00"/><rect x="10" y="8" width="3" height="1" fill="#000000"/><rect x="13" y="8" width="4" height="1" fill="#ffffff"/><rect x="17" y="8" width="1" height="1" fill="#000000"/><rect x="3" y="9" width="1" height="1" fill="#000000"/><rect x="4" y="9" width="1" height="1" fill="#ffff00"/><rect x="5" y="9" width="1" height="1" fill="#000000"/><rect x="7" y="9" width="1" height="1" fill="#ffff00"/><rect x="10" y="9" width="1" height="1" fill="#ffff00"/><rect x="11" y="9" width="1" height="1" fill="#000000"/><rect x="13" y="9" width="3" height="1" fill="#ffffff"/><rect x="16" y="9" width="2" height="1" fill="#000000"/><rect x="3" y="10" width="1" height="1" fill="#ffff00"/><rect x="4" y="10" width="1" height="1" fill="#000000"/><rect x="7" y="10" width="1" height="1" fill="#ffff00"/><rect x="8" y="10" width="1" height="1" fill="#ffffff"/><rect x="11" y="10" width="1" height="1" fill="#000000"/><rect x="12" y="10" width="4" height="1" fill="#ffffff"/><rect x="16" y="10" width="1" height="1" fill="#000000"/><rect x="3" y="11" width="3" height="1" fill="#000000"/><rect x="7" y="11" width="1" height="1" fill="#ffff00"/><rect x="8" y="11" width="2" height="1" fill="#ffffff"/><rect x="10" y="11" width="2" height="1" fill="#000000"/><rect x="12" y="11" width="3" height="1" fill="#ffffff"/><rect x="15" y="11" width="1" height="1" fill="#000000"/><rect x="3" y="12" width="3" height="1" fill="#000000"/><rect x="7" y="12" width="1" height="1" fill="#ffff00"/><rect x="8" y="12" width="3" height="1" fill="#ffffff"/><rect x="11" y="12" width="1" height="1" fill="#000000"/><rect x="12" y="12" width="2" height="1" fill="#ffffff"/><rect x="14" y="12" width="3" height="1" fill="#0000ff"/><rect x="3" y="13" width="3" height="1" fill="#000000"/><rect x="7" y="13" width="4" height="1" fill="#ffffff"/><rect x="11" y="13" width="1" height="1" fill="#000000"/><rect x="12" y="13" width="1" height="1" fill="#ffffff"/><rect x="13" y="13" width="5" height="1" fill="#0000ff"/><rect x="3" y="14" width="3" height="1" fill="#000000"/><rect x="6" y="14" width="4" height="1" fill="#ffffff"/><rect x="10" y="14" width="1" height="1" fill="#000000"/><rect x="11" y="14" width="7" height="1" fill="#0000ff"/><rect x="3" y="15" width="3" height="1" fill="#0000ff"/><rect x="6" y="15" width="4" height="1" fill="#ffffff"/><rect x="10" y="15" width="5" height="1" fill="#0000ff"/><rect x="3" y="16" width="4" height="1" fill="#0000ff"/><rect x="7" y="16" width="2" height="1" fill="#ffffff"/><rect x="9" y="16" width="5" height="1" fill="#0000ff"/><rect x="4" y="17" width="9" height="1" fill="#0000ff"/></svg></div><div style="position:absolute;left:378px;top:46px"><svg width="20" height="19" viewBox="0 0 20 19" shape-rendering="crispEdges" style="display:block"><rect x="9" y="3" width="1" height="1" fill="#ffff00"/><rect x="4" y="4" width="1" height="1" fill="#ffff00"/><rect x="9" y="4" width="1" height="1" fill="#ffff00"/><rect x="13" y="4" width="1" height="1" fill="#ffff00"/><rect x="5" y="5" width="1" height="1" fill="#000000"/><rect x="9" y="5" width="1" height="1" fill="#ffff00"/><rect x="12" y="5" width="1" height="1" fill="#000000"/><rect x="6" y="6" width="1" height="1" fill="#ffff00"/><rect x="9" y="6" width="1" height="1" fill="#ffff00"/><rect x="11" y="6" width="1" height="1" fill="#ffff00"/><rect x="4" y="7" width="10" height="1" fill="#ffff00"/><rect x="5" y="8" width="1" height="1" fill="#000000"/><rect x="6" y="8" width="1" height="1" fill="#ffff00"/><rect x="9" y="8" width="1" height="1" fill="#ffff00"/><rect x="12" y="8" width="1" height="1" fill="#ffff00"/><rect x="13" y="8" width="6" height="1" fill="#000000"/><rect x="4" y="9" width="1" height="1" fill="#ffff00"/><rect x="6" y="9" width="2" height="1" fill="#000000"/><rect x="9" y="9" width="1" height="1" fill="#ffff00"/><rect x="11" y="9" width="1" height="1" fill="#000000"/><rect x="12" y="9" width="5" height="1" fill="#ffffff"/><rect x="17" y="9" width="1" height="1" fill="#c0c0c0"/><rect x="18" y="9" width="1" height="1" fill="#000000"/><rect x="5" y="10" width="1" height="1" fill="#000000"/><rect x="6" y="10" width="2" height="1" fill="#ffffff"/><rect x="8" y="10" width="1" height="1" fill="#000000"/><rect x="9" y="10" width="1" height="1" fill="#ffff00"/><rect x="10" y="10" width="1" height="1" fill="#000000"/><rect x="11" y="10" width="2" height="1" fill="#ffffff"/><rect x="13" y="10" width="2" height="1" fill="#000000"/><rect x="15" y="10" width="1" height="1" fill="#ffffff"/><rect x="16" y="10" width="1" height="1" fill="#ffff00"/><rect x="17" y="10" width="1" height="1" fill="#c0c0c0"/><rect x="18" y="10" width="1" height="1" fill="#000000"/><rect x="5" y="11" width="1" height="1" fill="#000000"/><rect x="6" y="11" width="1" height="1" fill="#c0c0c0"/><rect x="7" y="11" width="1" height="1" fill="#ffff00"/><rect x="8" y="11" width="1" height="1" fill="#ffffff"/><rect x="9" y="11" width="1" height="1" fill="#ffff00"/><rect x="10" y="11" width="1" height="1" fill="#000000"/><rect x="11" y="11" width="1" height="1" fill="#ffffff"/><rect x="12" y="11" width="1" height="1" fill="#000000"/><rect x="13" y="11" width="2" height="1" fill="#ffffff"/><rect x="15" y="11" width="1" height="1" fill="#000000"/><rect x="16" y="11" width="1" height="1" fill="#ffffff"/><rect x="17" y="11" width="1" height="1" fill="#ffff00"/><rect x="18" y="11" width="1" height="1" fill="#000000"/><rect x="5" y="12" width="1" height="1" fill="#000000"/><rect x="6" y="12" width="1" height="1" fill="#ffff00"/><rect x="7" y="12" width="1" height="1" fill="#c0c0c0"/><rect x="8" y="12" width="1" height="1" fill="#ffffff"/><rect x="9" y="12" width="1" height="1" fill="#ffff00"/><rect x="10" y="12" width="1" height="1" fill="#ffffff"/><rect x="11" y="12" width="1" height="1" fill="#000000"/><rect x="12" y="12" width="2" height="1" fill="#ffffff"/><rect x="14" y="12" width="1" height="1" fill="#000000"/><rect x="15" y="12" width="1" height="1" fill="#ffffff"/><rect x="16" y="12" width="1" height="1" fill="#ffff00"/><rect x="17" y="12" width="1" height="1" fill="#c0c0c0"/><rect x="18" y="12" width="1" height="1" fill="#000000"/><rect x="5" y="13" width="1" height="1" fill="#000000"/><rect x="6" y="13" width="1" height="1" fill="#c0c0c0"/><rect x="7" y="13" width="1" height="1" fill="#ffff00"/><rect x="8" y="13" width="1" height="1" fill="#c0c0c0"/><rect x="9" y="13" width="1" height="1" fill="#ffff00"/><rect x="10" y="13" width="1" height="1" fill="#000000"/><rect x="11" y="13" width="2" height="1" fill="#ffffff"/><rect x="13" y="13" width="1" height="1" fill="#000000"/><rect x="14" y="13" width="2" height="1" fill="#ffffff"/><rect x="16" y="13" width="1" height="1" fill="#c0c0c0"/><rect x="17" y="13" width="1" height="1" fill="#ffff00"/><rect x="18" y="13" width="1" height="1" fill="#000000"/><rect x="5" y="14" width="1" height="1" fill="#000000"/><rect x="6" y="14" width="1" height="1" fill="#ffff00"/><rect x="7" y="14" width="2" height="1" fill="#c0c0c0"/><rect x="9" y="14" width="1" height="1" fill="#ffff00"/><rect x="10" y="14" width="3" height="1" fill="#000000"/><rect x="13" y="14" width="2" height="1" fill="#ffffff"/><rect x="15" y="14" width="1" height="1" fill="#000000"/><rect x="16" y="14" width="1" height="1" fill="#ffff00"/><rect x="17" y="14" width="1" height="1" fill="#c0c0c0"/><rect x="18" y="14" width="1" height="1" fill="#000000"/><rect x="5" y="15" width="1" height="1" fill="#000000"/><rect x="6" y="15" width="1" height="1" fill="#c0c0c0"/><rect x="7" y="15" width="1" height="1" fill="#ffff00"/><rect x="8" y="15" width="2" height="1" fill="#000000"/><rect x="10" y="15" width="2" height="1" fill="#ffff00"/><rect x="12" y="15" width="3" height="1" fill="#000000"/><rect x="15" y="15" width="1" height="1" fill="#ffff00"/><rect x="16" y="15" width="1" height="1" fill="#c0c0c0"/><rect x="17" y="15" width="1" height="1" fill="#ffff00"/><rect x="18" y="15" width="1" height="1" fill="#000000"/><rect x="5" y="16" width="1" height="1" fill="#000000"/><rect x="6" y="16" width="1" height="1" fill="#ffff00"/><rect x="7" y="16" width="1" height="1" fill="#c0c0c0"/><rect x="8" y="16" width="1" height="1" fill="#ffff00"/><rect x="9" y="16" width="1" height="1" fill="#c0c0c0"/><rect x="10" y="16" width="2" height="1" fill="#ffff00"/><rect x="12" y="16" width="1" height="1" fill="#c0c0c0"/><rect x="13" y="16" width="1" height="1" fill="#ffff00"/><rect x="14" y="16" width="1" height="1" fill="#c0c0c0"/><rect x="15" y="16" width="1" height="1" fill="#ffff00"/><rect x="16" y="16" width="1" height="1" fill="#c0c0c0"/><rect x="17" y="16" width="1" height="1" fill="#ffff00"/><rect x="18" y="16" width="1" height="1" fill="#000000"/><rect x="5" y="17" width="15" height="1" fill="#000000"/><rect x="6" y="18" width="14" height="1" fill="#000000"/></svg></div><div style="position:absolute;left:404px;top:51px"><svg width="17" height="11" viewBox="0 0 17 11" shape-rendering="crispEdges" style="display:block"><rect x="1" y="0" width="16" height="1" fill="#000000"/><rect x="1" y="1" width="1" height="1" fill="#000000"/><rect x="2" y="1" width="7" height="1" fill="#ffffff"/><rect x="9" y="1" width="6" height="1" fill="#c0c0c0"/><rect x="15" y="1" width="1" height="1" fill="#000000"/><rect x="2" y="2" width="1" height="1" fill="#000000"/><rect x="3" y="2" width="6" height="1" fill="#ffffff"/><rect x="9" y="2" width="5" height="1" fill="#c0c0c0"/><rect x="14" y="2" width="1" height="1" fill="#000000"/><rect x="3" y="3" width="1" height="1" fill="#000000"/><rect x="4" y="3" width="5" height="1" fill="#ffffff"/><rect x="9" y="3" width="4" height="1" fill="#c0c0c0"/><rect x="13" y="3" width="1" height="1" fill="#000000"/><rect x="4" y="4" width="1" height="1" fill="#000000"/><rect x="5" y="4" width="4" height="1" fill="#ffffff"/><rect x="9" y="4" width="3" height="1" fill="#c0c0c0"/><rect x="12" y="4" width="1" height="1" fill="#000000"/><rect x="5" y="5" width="1" height="1" fill="#000000"/><rect x="6" y="5" width="2" height="1" fill="#ffffff"/><rect x="8" y="5" width="4" height="1" fill="#c0c0c0"/><rect x="12" y="5" width="1" height="1" fill="#000000"/><rect x="6" y="6" width="1" height="1" fill="#000000"/><rect x="7" y="6" width="2" height="1" fill="#ffffff"/><rect x="9" y="6" width="1" height="1" fill="#c0c0c0"/><rect x="10" y="6" width="1" height="1" fill="#000000"/><rect x="6" y="7" width="1" height="1" fill="#000000"/><rect x="7" y="7" width="2" height="1" fill="#ffffff"/><rect x="9" y="7" width="1" height="1" fill="#c0c0c0"/><rect x="10" y="7" width="1" height="1" fill="#000000"/><rect x="6" y="8" width="1" height="1" fill="#000000"/><rect x="7" y="8" width="2" height="1" fill="#ffffff"/><rect x="9" y="8" width="1" height="1" fill="#c0c0c0"/><rect x="10" y="8" width="1" height="1" fill="#000000"/><rect x="6" y="9" width="1" height="1" fill="#000000"/><rect x="7" y="9" width="2" height="1" fill="#ffffff"/><rect x="9" y="9" width="1" height="1" fill="#c0c0c0"/><rect x="10" y="9" width="1" height="1" fill="#000000"/><rect x="6" y="10" width="5" height="1" fill="#000000"/></svg></div><div style="position:absolute;left:426px;top:46px"><svg width="19" height="19" viewBox="0 0 19 19" shape-rendering="crispEdges" style="display:block"><rect x="12" y="3" width="5" height="1" fill="#000000"/><rect x="10" y="4" width="2" height="1" fill="#000000"/><rect x="12" y="4" width="4" height="1" fill="#ffffff"/><rect x="16" y="4" width="1" height="1" fill="#000000"/><rect x="9" y="5" width="1" height="1" fill="#000000"/><rect x="10" y="5" width="2" height="1" fill="#ffffff"/><rect x="12" y="5" width="1" height="1" fill="#c0c0c0"/><rect x="13" y="5" width="2" height="1" fill="#ffffff"/><rect x="15" y="5" width="1" height="1" fill="#000000"/><rect x="8" y="6" width="1" height="1" fill="#000000"/><rect x="9" y="6" width="1" height="1" fill="#ffffff"/><rect x="10" y="6" width="2" height="1" fill="#c0c0c0"/><rect x="12" y="6" width="2" height="1" fill="#ffffff"/><rect x="14" y="6" width="1" height="1" fill="#000000"/><rect x="7" y="7" width="1" height="1" fill="#000000"/><rect x="8" y="7" width="2" height="1" fill="#ffffff"/><rect x="10" y="7" width="1" height="1" fill="#c0c0c0"/><rect x="11" y="7" width="2" height="1" fill="#ffffff"/><rect x="13" y="7" width="3" height="1" fill="#000000"/><rect x="6" y="8" width="1" height="1" fill="#000000"/><rect x="7" y="8" width="2" height="1" fill="#ffffff"/><rect x="9" y="8" width="1" height="1" fill="#c0c0c0"/><rect x="10" y="8" width="3" height="1" fill="#00ffff"/><rect x="13" y="8" width="1" height="1" fill="#000000"/><rect x="14" y="8" width="1" height="1" fill="#ffff00"/><rect x="15" y="8" width="1" height="1" fill="#ffffff"/><rect x="16" y="8" width="1" height="1" fill="#000000"/><rect x="5" y="9" width="1" height="1" fill="#000000"/><rect x="6" y="9" width="2" height="1" fill="#ffffff"/><rect x="8" y="9" width="2" height="1" fill="#00ffff"/><rect x="10" y="9" width="1" height="1" fill="#ffffff"/><rect x="11" y="9" width="2" height="1" fill="#00ffff"/><rect x="13" y="9" width="1" height="1" fill="#000000"/><rect x="14" y="9" width="1" height="1" fill="#ffff00"/><rect x="15" y="9" width="1" height="1" fill="#ffffff"/><rect x="16" y="9" width="1" height="1" fill="#c0c0c0"/><rect x="17" y="9" width="1" height="1" fill="#000000"/><rect x="4" y="10" width="1" height="1" fill="#000000"/><rect x="5" y="10" width="2" height="1" fill="#ffffff"/><rect x="7" y="10" width="6" height="1" fill="#00ffff"/><rect x="13" y="10" width="1" height="1" fill="#000000"/><rect x="14" y="10" width="1" height="1" fill="#ffff00"/><rect x="15" y="10" width="1" height="1" fill="#ffffff"/><rect x="16" y="10" width="1" height="1" fill="#c0c0c0"/><rect x="17" y="10" width="1" height="1" fill="#000000"/><rect x="3" y="11" width="1" height="1" fill="#000000"/><rect x="4" y="11" width="3" height="1" fill="#ffffff"/><rect x="7" y="11" width="5" height="1" fill="#00ffff"/><rect x="12" y="11" width="1" height="1" fill="#ffffff"/><rect x="13" y="11" width="1" height="1" fill="#000000"/><rect x="14" y="11" width="2" height="1" fill="#ffffff"/><rect x="16" y="11" width="1" height="1" fill="#c0c0c0"/><rect x="17" y="11" width="1" height="1" fill="#000000"/><rect x="2" y="12" width="1" height="1" fill="#000000"/><rect x="3" y="12" width="2" height="1" fill="#ffff00"/><rect x="5" y="12" width="2" height="1" fill="#ffffff"/><rect x="7" y="12" width="4" height="1" fill="#00ffff"/><rect x="11" y="12" width="1" height="1" fill="#000000"/><rect x="12" y="12" width="2" height="1" fill="#0000ff"/><rect x="14" y="12" width="2" height="1" fill="#ffffff"/><rect x="16" y="12" width="1" height="1" fill="#000000"/><rect x="2" y="13" width="1" height="1" fill="#000000"/><rect x="3" y="13" width="4" height="1" fill="#ffff00"/><rect x="7" y="13" width="4" height="1" fill="#000000"/><rect x="11" y="13" width="1" height="1" fill="#0000ff"/><rect x="12" y="13" width="1" height="1" fill="#00ffff"/><rect x="13" y="13" width="1" height="1" fill="#0000ff"/><rect x="14" y="13" width="3" height="1" fill="#000000"/><rect x="3" y="14" width="1" height="1" fill="#000000"/><rect x="4" y="14" width="5" height="1" fill="#ffff00"/><rect x="9" y="14" width="1" height="1" fill="#000000"/><rect x="10" y="14" width="1" height="1" fill="#0000ff"/><rect x="11" y="14" width="1" height="1" fill="#00ffff"/><rect x="12" y="14" width="2" height="1" fill="#0000ff"/><rect x="14" y="14" width="1" height="1" fill="#000000"/><rect x="4" y="15" width="2" height="1" fill="#000000"/><rect x="6" y="15" width="4" height="1" fill="#ffff00"/><rect x="10" y="15" width="1" height="1" fill="#000000"/><rect x="11" y="15" width="1" height="1" fill="#0000ff"/><rect x="12" y="15" width="1" height="1" fill="#00ffff"/><rect x="13" y="15" width="2" height="1" fill="#0000ff"/><rect x="6" y="16" width="2" height="1" fill="#000000"/><rect x="8" y="16" width="2" height="1" fill="#ffff00"/><rect x="10" y="16" width="1" height="1" fill="#000000"/><rect x="11" y="16" width="2" height="1" fill="#0000ff"/><rect x="13" y="16" width="1" height="1" fill="#00ffff"/><rect x="14" y="16" width="2" height="1" fill="#0000ff"/><rect x="8" y="17" width="2" height="1" fill="#000000"/><rect x="12" y="17" width="5" height="1" fill="#0000ff"/><rect x="13" y="18" width="3" height="1" fill="#0000ff"/></svg></div><div style="position:absolute;left:450px;top:48px"><svg width="17" height="18" viewBox="0 0 17 18" shape-rendering="crispEdges" style="display:block"><rect x="4" y="1" width="4" height="1" fill="#000000"/><rect x="10" y="1" width="1" height="1" fill="#000000"/><rect x="2" y="2" width="2" height="1" fill="#000000"/><rect x="8" y="2" width="3" height="1" fill="#000000"/><rect x="1" y="3" width="1" height="1" fill="#000000"/><rect x="7" y="3" width="4" height="1" fill="#000000"/><rect x="1" y="4" width="1" height="1" fill="#000000"/><rect x="11" y="4" width="4" height="1" fill="#000000"/><rect x="8" y="5" width="9" height="1" fill="#000000"/><rect x="6" y="6" width="7" height="1" fill="#000000"/><rect x="13" y="6" width="1" height="1" fill="#ffffff"/><rect x="14" y="6" width="3" height="1" fill="#000000"/><rect x="5" y="7" width="6" height="1" fill="#000000"/><rect x="11" y="7" width="4" height="1" fill="#ffffff"/><rect x="15" y="7" width="2" height="1" fill="#000000"/><rect x="5" y="8" width="5" height="1" fill="#000000"/><rect x="10" y="8" width="4" height="1" fill="#ffffff"/><rect x="14" y="8" width="1" height="1" fill="#0000ff"/><rect x="15" y="8" width="1" height="1" fill="#ffffff"/><rect x="16" y="8" width="1" height="1" fill="#000000"/><rect x="5" y="9" width="4" height="1" fill="#000000"/><rect x="9" y="9" width="2" height="1" fill="#ffffff"/><rect x="11" y="9" width="1" height="1" fill="#0000ff"/><rect x="12" y="9" width="4" height="1" fill="#ffffff"/><rect x="16" y="9" width="1" height="1" fill="#000000"/><rect x="5" y="10" width="3" height="1" fill="#000000"/><rect x="8" y="10" width="5" height="1" fill="#ffffff"/><rect x="13" y="10" width="1" height="1" fill="#000000"/><rect x="14" y="10" width="1" height="1" fill="#ffffff"/><rect x="15" y="10" width="1" height="1" fill="#000000"/><rect x="5" y="11" width="2" height="1" fill="#000000"/><rect x="7" y="11" width="5" height="1" fill="#ffffff"/><rect x="12" y="11" width="1" height="1" fill="#000000"/><rect x="13" y="11" width="2" height="1" fill="#ffffff"/><rect x="15" y="11" width="1" height="1" fill="#000000"/><rect x="5" y="12" width="3" height="1" fill="#000000"/><rect x="8" y="12" width="3" height="1" fill="#ffffff"/><rect x="11" y="12" width="1" height="1" fill="#000000"/><rect x="12" y="12" width="2" height="1" fill="#ffffff"/><rect x="14" y="12" width="1" height="1" fill="#000000"/><rect x="5" y="13" width="4" height="1" fill="#000000"/><rect x="9" y="13" width="2" height="1" fill="#ffffff"/><rect x="11" y="13" width="2" height="1" fill="#000000"/><rect x="13" y="13" width="2" height="1" fill="#0000ff"/><rect x="5" y="14" width="1" height="1" fill="#000000"/><rect x="6" y="14" width="3" height="1" fill="#0000ff"/><rect x="9" y="14" width="1" height="1" fill="#ffffff"/><rect x="10" y="14" width="1" height="1" fill="#000000"/><rect x="11" y="14" width="5" height="1" fill="#0000ff"/><rect x="4" y="15" width="13" height="1" fill="#0000ff"/><rect x="4" y="16" width="12" height="1" fill="#0000ff"/><rect x="5" y="17" width="9" height="1" fill="#0000ff"/></svg></div><div style="position:absolute;left:0px;top:72px;width:362px;height:480px;background:#d4d0c8"></div><div style="position:absolute;left:2px;top:72px;width:32px;height:1px;background:#ffffff"></div><div style="position:absolute;left:1px;top:73px;width:1px;height:1px;background:#ffffff"></div><div style="position:absolute;left:0px;top:74px;width:1px;height:20px;background:#ffffff"></div><div style="position:absolute;left:34px;top:73px;width:1px;height:1px;background:#808080"></div><div style="position:absolute;left:34px;top:74px;width:1px;height:18px;background:#808080"></div><div style="position:absolute;left:35px;top:74px;width:1px;height:18px;background:#404040"></div><div style="position:absolute;left:35px;top:92px;width:327px;height:1px;background:#ffffff"></div><div class="t" style="left:7px;top:73px;letter-spacing:0.3px">Tree</div><div style="position:absolute;left:0px;top:96px;width:360px;height:454px;background:#fff;border:1px solid;border-color:#808080 #ffffff #ffffff #808080;box-shadow:inset 1px 1px #404040,inset -1px -1px #d4d0c8"></div><div style="position:absolute;left:2px;top:98px;width:342px;height:436px;overflow:hidden"><div style="position:absolute;left:-2px;top:-98px"><div style="position:absolute;left:35px;top:106px;width:5px;height:1px;background:repeating-linear-gradient(to right,#808080 0 1px,transparent 1px 2px)"></div><div style="position:absolute;left:29px;top:108px;width:1px;height:14px;background:repeating-linear-gradient(to bottom,#808080 0 1px,transparent 1px 2px)"></div><div style="position:absolute;left:29px;top:98px;width:1px;height:9px;background:repeating-linear-gradient(to bottom,#808080 0 1px,transparent 1px 2px)"></div><div style="position:absolute;left:35px;top:122px;width:5px;height:1px;background:repeating-linear-gradient(to right,#808080 0 1px,transparent 1px 2px)"></div><div style="position:absolute;left:29px;top:124px;width:1px;height:414px;background:repeating-linear-gradient(to bottom,#808080 0 1px,transparent 1px 2px)"></div><div style="position:absolute;left:29px;top:114px;width:1px;height:9px;background:repeating-linear-gradient(to bottom,#808080 0 1px,transparent 1px 2px)"></div><div style="position:absolute;left:53px;top:138px;width:6px;height:1px;background:repeating-linear-gradient(to right,#808080 0 1px,transparent 1px 2px)"></div><div style="position:absolute;left:48px;top:140px;width:1px;height:78px;background:repeating-linear-gradient(to bottom,#808080 0 1px,transparent 1px 2px)"></div><div style="position:absolute;left:48px;top:130px;width:1px;height:9px;background:repeating-linear-gradient(to bottom,#808080 0 1px,transparent 1px 2px)"></div><div style="position:absolute;left:69px;top:154px;width:9px;height:1px;background:repeating-linear-gradient(to right,#808080 0 1px,transparent 1px 2px)"></div><div style="position:absolute;left:67px;top:156px;width:1px;height:14px;background:repeating-linear-gradient(to bottom,#808080 0 1px,transparent 1px 2px)"></div><div style="position:absolute;left:67px;top:146px;width:1px;height:9px;background:repeating-linear-gradient(to bottom,#808080 0 1px,transparent 1px 2px)"></div><div style="position:absolute;left:69px;top:170px;width:9px;height:1px;background:repeating-linear-gradient(to right,#808080 0 1px,transparent 1px 2px)"></div><div style="position:absolute;left:67px;top:172px;width:1px;height:14px;background:repeating-linear-gradient(to bottom,#808080 0 1px,transparent 1px 2px)"></div><div style="position:absolute;left:67px;top:162px;width:1px;height:9px;background:repeating-linear-gradient(to bottom,#808080 0 1px,transparent 1px 2px)"></div><div style="position:absolute;left:69px;top:186px;width:9px;height:1px;background:repeating-linear-gradient(to right,#808080 0 1px,transparent 1px 2px)"></div><div style="position:absolute;left:67px;top:188px;width:1px;height:14px;background:repeating-linear-gradient(to bottom,#808080 0 1px,transparent 1px 2px)"></div><div style="position:absolute;left:67px;top:178px;width:1px;height:9px;background:repeating-linear-gradient(to bottom,#808080 0 1px,transparent 1px 2px)"></div><div style="position:absolute;left:69px;top:202px;width:9px;height:1px;background:repeating-linear-gradient(to right,#808080 0 1px,transparent 1px 2px)"></div><div style="position:absolute;left:67px;top:194px;width:1px;height:9px;background:repeating-linear-gradient(to bottom,#808080 0 1px,transparent 1px 2px)"></div><div style="position:absolute;left:53px;top:218px;width:6px;height:1px;background:repeating-linear-gradient(to right,#808080 0 1px,transparent 1px 2px)"></div><div style="position:absolute;left:48px;top:220px;width:1px;height:78px;background:repeating-linear-gradient(to bottom,#808080 0 1px,transparent 1px 2px)"></div><div style="position:absolute;left:48px;top:210px;width:1px;height:9px;background:repeating-linear-gradient(to bottom,#808080 0 1px,transparent 1px 2px)"></div><div style="position:absolute;left:69px;top:234px;width:9px;height:1px;background:repeating-linear-gradient(to right,#808080 0 1px,transparent 1px 2px)"></div><div style="position:absolute;left:67px;top:236px;width:1px;height:14px;background:repeating-linear-gradient(to bottom,#808080 0 1px,transparent 1px 2px)"></div><div style="position:absolute;left:67px;top:226px;width:1px;height:9px;background:repeating-linear-gradient(to bottom,#808080 0 1px,transparent 1px 2px)"></div><div style="position:absolute;left:69px;top:250px;width:9px;height:1px;background:repeating-linear-gradient(to right,#808080 0 1px,transparent 1px 2px)"></div><div style="position:absolute;left:67px;top:252px;width:1px;height:14px;background:repeating-linear-gradient(to bottom,#808080 0 1px,transparent 1px 2px)"></div><div style="position:absolute;left:67px;top:242px;width:1px;height:9px;background:repeating-linear-gradient(to bottom,#808080 0 1px,transparent 1px 2px)"></div><div style="position:absolute;left:69px;top:266px;width:9px;height:1px;background:repeating-linear-gradient(to right,#808080 0 1px,transparent 1px 2px)"></div><div style="position:absolute;left:67px;top:268px;width:1px;height:14px;background:repeating-linear-gradient(to bottom,#808080 0 1px,transparent 1px 2px)"></div><div style="position:absolute;left:67px;top:258px;width:1px;height:9px;background:repeating-linear-gradient(to bottom,#808080 0 1px,transparent 1px 2px)"></div><div style="position:absolute;left:69px;top:282px;width:9px;height:1px;background:repeating-linear-gradient(to right,#808080 0 1px,transparent 1px 2px)"></div><div style="position:absolute;left:67px;top:274px;width:1px;height:9px;background:repeating-linear-gradient(to bottom,#808080 0 1px,transparent 1px 2px)"></div><div style="position:absolute;left:53px;top:298px;width:6px;height:1px;background:repeating-linear-gradient(to right,#808080 0 1px,transparent 1px 2px)"></div><div style="position:absolute;left:48px;top:300px;width:1px;height:62px;background:repeating-linear-gradient(to bottom,#808080 0 1px,transparent 1px 2px)"></div><div style="position:absolute;left:48px;top:290px;width:1px;height:9px;background:repeating-linear-gradient(to bottom,#808080 0 1px,transparent 1px 2px)"></div><div style="position:absolute;left:73px;top:314px;width:5px;height:1px;background:repeating-linear-gradient(to right,#808080 0 1px,transparent 1px 2px)"></div><div style="position:absolute;left:67px;top:306px;width:1px;height:9px;background:repeating-linear-gradient(to bottom,#808080 0 1px,transparent 1px 2px)"></div><div style="position:absolute;left:87px;top:330px;width:10px;height:1px;background:repeating-linear-gradient(to right,#808080 0 1px,transparent 1px 2px)"></div><div style="position:absolute;left:86px;top:332px;width:1px;height:14px;background:repeating-linear-gradient(to bottom,#808080 0 1px,transparent 1px 2px)"></div><div style="position:absolute;left:86px;top:322px;width:1px;height:9px;background:repeating-linear-gradient(to bottom,#808080 0 1px,transparent 1px 2px)"></div><div style="position:absolute;left:87px;top:346px;width:10px;height:1px;background:repeating-linear-gradient(to right,#808080 0 1px,transparent 1px 2px)"></div><div style="position:absolute;left:86px;top:338px;width:1px;height:9px;background:repeating-linear-gradient(to bottom,#808080 0 1px,transparent 1px 2px)"></div><div style="position:absolute;left:49px;top:362px;width:10px;height:1px;background:repeating-linear-gradient(to right,#808080 0 1px,transparent 1px 2px)"></div><div style="position:absolute;left:48px;top:364px;width:1px;height:14px;background:repeating-linear-gradient(to bottom,#808080 0 1px,transparent 1px 2px)"></div><div style="position:absolute;left:48px;top:354px;width:1px;height:9px;background:repeating-linear-gradient(to bottom,#808080 0 1px,transparent 1px 2px)"></div><div style="position:absolute;left:53px;top:378px;width:6px;height:1px;background:repeating-linear-gradient(to right,#808080 0 1px,transparent 1px 2px)"></div><div style="position:absolute;left:48px;top:380px;width:1px;height:78px;background:repeating-linear-gradient(to bottom,#808080 0 1px,transparent 1px 2px)"></div><div style="position:absolute;left:48px;top:370px;width:1px;height:9px;background:repeating-linear-gradient(to bottom,#808080 0 1px,transparent 1px 2px)"></div><div style="position:absolute;left:69px;top:394px;width:9px;height:1px;background:repeating-linear-gradient(to right,#808080 0 1px,transparent 1px 2px)"></div><div style="position:absolute;left:67px;top:396px;width:1px;height:14px;background:repeating-linear-gradient(to bottom,#808080 0 1px,transparent 1px 2px)"></div><div style="position:absolute;left:67px;top:386px;width:1px;height:9px;background:repeating-linear-gradient(to bottom,#808080 0 1px,transparent 1px 2px)"></div><div style="position:absolute;left:69px;top:410px;width:9px;height:1px;background:repeating-linear-gradient(to right,#808080 0 1px,transparent 1px 2px)"></div><div style="position:absolute;left:67px;top:412px;width:1px;height:14px;background:repeating-linear-gradient(to bottom,#808080 0 1px,transparent 1px 2px)"></div><div style="position:absolute;left:67px;top:402px;width:1px;height:9px;background:repeating-linear-gradient(to bottom,#808080 0 1px,transparent 1px 2px)"></div><div style="position:absolute;left:69px;top:426px;width:9px;height:1px;background:repeating-linear-gradient(to right,#808080 0 1px,transparent 1px 2px)"></div><div style="position:absolute;left:67px;top:428px;width:1px;height:14px;background:repeating-linear-gradient(to bottom,#808080 0 1px,transparent 1px 2px)"></div><div style="position:absolute;left:67px;top:418px;width:1px;height:9px;background:repeating-linear-gradient(to bottom,#808080 0 1px,transparent 1px 2px)"></div><div style="position:absolute;left:69px;top:442px;width:9px;height:1px;background:repeating-linear-gradient(to right,#808080 0 1px,transparent 1px 2px)"></div><div style="position:absolute;left:67px;top:434px;width:1px;height:9px;background:repeating-linear-gradient(to bottom,#808080 0 1px,transparent 1px 2px)"></div><div style="position:absolute;left:53px;top:458px;width:6px;height:1px;background:repeating-linear-gradient(to right,#808080 0 1px,transparent 1px 2px)"></div><div style="position:absolute;left:48px;top:450px;width:1px;height:9px;background:repeating-linear-gradient(to bottom,#808080 0 1px,transparent 1px 2px)"></div><div style="position:absolute;left:73px;top:474px;width:5px;height:1px;background:repeating-linear-gradient(to right,#808080 0 1px,transparent 1px 2px)"></div><div style="position:absolute;left:67px;top:466px;width:1px;height:9px;background:repeating-linear-gradient(to bottom,#808080 0 1px,transparent 1px 2px)"></div><div style="position:absolute;left:87px;top:490px;width:10px;height:1px;background:repeating-linear-gradient(to right,#808080 0 1px,transparent 1px 2px)"></div><div style="position:absolute;left:86px;top:492px;width:1px;height:14px;background:repeating-linear-gradient(to bottom,#808080 0 1px,transparent 1px 2px)"></div><div style="position:absolute;left:86px;top:482px;width:1px;height:9px;background:repeating-linear-gradient(to bottom,#808080 0 1px,transparent 1px 2px)"></div><div style="position:absolute;left:87px;top:506px;width:10px;height:1px;background:repeating-linear-gradient(to right,#808080 0 1px,transparent 1px 2px)"></div><div style="position:absolute;left:86px;top:508px;width:1px;height:14px;background:repeating-linear-gradient(to bottom,#808080 0 1px,transparent 1px 2px)"></div><div style="position:absolute;left:86px;top:498px;width:1px;height:9px;background:repeating-linear-gradient(to bottom,#808080 0 1px,transparent 1px 2px)"></div><div style="position:absolute;left:87px;top:522px;width:10px;height:1px;background:repeating-linear-gradient(to right,#808080 0 1px,transparent 1px 2px)"></div><div style="position:absolute;left:86px;top:514px;width:1px;height:9px;background:repeating-linear-gradient(to bottom,#808080 0 1px,transparent 1px 2px)"></div><div style="position:absolute;left:31px;top:538px;width:9px;height:1px;background:repeating-linear-gradient(to right,#808080 0 1px,transparent 1px 2px)"></div><div style="position:absolute;left:29px;top:530px;width:1px;height:9px;background:repeating-linear-gradient(to bottom,#808080 0 1px,transparent 1px 2px)"></div><div style="position:absolute;left:29px;top:98px;width:1px;height:9px;background:repeating-linear-gradient(to bottom,#808080 0 1px,transparent 1px 2px)"></div><div style="position:absolute;left:25px;top:102px;width:7px;height:7px;border:1px solid #808080;background:#fff"></div><div style="position:absolute;left:27px;top:106px;width:5px;height:1px;background:#000"></div><div style="position:absolute;left:29px;top:104px;width:1px;height:5px;background:#000"></div><svg style="position:absolute;left:39px;top:98px" width="17" height="15" shape-rendering="crispEdges"><use href="#folder"/></svg><div class="t" style="left:61px;top:98px;letter-spacing:-0.125px">Computers</div><div style="position:absolute;left:25px;top:118px;width:7px;height:7px;border:1px solid #808080;background:#fff"></div><div style="position:absolute;left:27px;top:122px;width:5px;height:1px;background:#000"></div><svg style="position:absolute;left:39px;top:114px" width="16" height="16" shape-rendering="crispEdges"><use href="#ou"/></svg><div class="t" style="left:60px;top:114px;letter-spacing:0.1px">Departments</div><div style="position:absolute;left:44px;top:134px;width:7px;height:7px;border:1px solid #808080;background:#fff"></div><div style="position:absolute;left:46px;top:138px;width:5px;height:1px;background:#000"></div><svg style="position:absolute;left:58px;top:130px" width="16" height="16" shape-rendering="crispEdges"><use href="#ou"/></svg><div class="t" style="left:79px;top:130px;letter-spacing:0.0px">Design</div><svg style="position:absolute;left:77px;top:146px" width="16" height="16" shape-rendering="crispEdges"><use href="#ou"/></svg><div class="t" style="left:99px;top:146px;letter-spacing:0.0px">Consultants</div><svg style="position:absolute;left:77px;top:162px" width="16" height="16" shape-rendering="crispEdges"><use href="#ou"/></svg><div class="t" style="left:98px;top:162px;letter-spacing:-0.077px">Design Leaders</div><svg style="position:absolute;left:77px;top:178px" width="16" height="16" shape-rendering="crispEdges"><use href="#ou"/></svg><div class="t" style="left:98px;top:178px;letter-spacing:0.0px">Designers</div><svg style="position:absolute;left:77px;top:194px" width="16" height="16" shape-rendering="crispEdges"><use href="#ou"/></svg><div class="t" style="left:98px;top:194px;letter-spacing:0.5px">Interns</div><div style="position:absolute;left:44px;top:214px;width:7px;height:7px;border:1px solid #808080;background:#fff"></div><div style="position:absolute;left:46px;top:218px;width:5px;height:1px;background:#000"></div><svg style="position:absolute;left:58px;top:210px" width="16" height="16" shape-rendering="crispEdges"><use href="#ou"/></svg><div style="position:absolute;left:78px;top:210px;width:60px;height:16px;background:#0a246a;outline:1px dotted #f0d000;outline-offset:-1px"></div><div class="t" style="left:79px;top:210px;color:#fff;letter-spacing:0.1px">Engineering</div><svg style="position:absolute;left:77px;top:226px" width="16" height="16" shape-rendering="crispEdges"><use href="#ou"/></svg><div class="t" style="left:99px;top:226px;letter-spacing:0.0px">Consultants</div><svg style="position:absolute;left:77px;top:242px" width="16" height="16" shape-rendering="crispEdges"><use href="#ou"/></svg><div class="t" style="left:98px;top:242px;letter-spacing:-0.13px">Engineering Team Leaders</div><svg style="position:absolute;left:77px;top:258px" width="16" height="16" shape-rendering="crispEdges"><use href="#ou"/></svg><div class="t" style="left:98px;top:258px;letter-spacing:0.0px">Engineers</div><svg style="position:absolute;left:77px;top:274px" width="16" height="16" shape-rendering="crispEdges"><use href="#ou"/></svg><div class="t" style="left:98px;top:274px;letter-spacing:0.5px">Interns</div><div style="position:absolute;left:44px;top:294px;width:7px;height:7px;border:1px solid #808080;background:#fff"></div><div style="position:absolute;left:46px;top:298px;width:5px;height:1px;background:#000"></div><svg style="position:absolute;left:58px;top:290px" width="16" height="16" shape-rendering="crispEdges"><use href="#ou"/></svg><div class="t" style="left:79px;top:290px;letter-spacing:0.0px">Finance</div><div style="position:absolute;left:63px;top:310px;width:7px;height:7px;border:1px solid #808080;background:#fff"></div><div style="position:absolute;left:65px;top:314px;width:5px;height:1px;background:#000"></div><svg style="position:absolute;left:77px;top:306px" width="16" height="16" shape-rendering="crispEdges"><use href="#ou"/></svg><div class="t" style="left:99px;top:306px;letter-spacing:0.0px">Accounting</div><svg style="position:absolute;left:96px;top:322px" width="16" height="16" shape-rendering="crispEdges"><use href="#ou"/></svg><div class="t" style="left:118px;top:322px;letter-spacing:-0.067px">Accounts Payable</div><svg style="position:absolute;left:96px;top:338px" width="16" height="16" shape-rendering="crispEdges"><use href="#ou"/></svg><div class="t" style="left:118px;top:338px;letter-spacing:-0.111px">Accounts Receivable</div><svg style="position:absolute;left:58px;top:354px" width="16" height="16" shape-rendering="crispEdges"><use href="#ou"/></svg><div class="t" style="left:79px;top:354px;letter-spacing:-0.143px">Human Resources</div><div style="position:absolute;left:44px;top:374px;width:7px;height:7px;border:1px solid #808080;background:#fff"></div><div style="position:absolute;left:46px;top:378px;width:5px;height:1px;background:#000"></div><svg style="position:absolute;left:58px;top:370px" width="16" height="16" shape-rendering="crispEdges"><use href="#ou"/></svg><div class="t" style="left:79px;top:370px;letter-spacing:0.143px">Information Technology</div><svg style="position:absolute;left:77px;top:386px" width="16" height="16" shape-rendering="crispEdges"><use href="#ou"/></svg><div class="t" style="left:99px;top:386px;letter-spacing:0.0px">Consultants</div><svg style="position:absolute;left:77px;top:402px" width="16" height="16" shape-rendering="crispEdges"><use href="#ou"/></svg><div class="t" style="left:98px;top:402px;letter-spacing:-0.25px">Help Desk</div><svg style="position:absolute;left:77px;top:418px" width="16" height="16" shape-rendering="crispEdges"><use href="#ou"/></svg><div class="t" style="left:98px;top:418px;letter-spacing:0.048px">Network Administration</div><svg style="position:absolute;left:77px;top:434px" width="16" height="16" shape-rendering="crispEdges"><use href="#ou"/></svg><div class="t" style="left:98px;top:434px;letter-spacing:-0.056px">Support Technicians</div><div style="position:absolute;left:44px;top:454px;width:7px;height:7px;border:1px solid #808080;background:#fff"></div><div style="position:absolute;left:46px;top:458px;width:5px;height:1px;background:#000"></div><svg style="position:absolute;left:58px;top:450px" width="16" height="16" shape-rendering="crispEdges"><use href="#ou"/></svg><div class="t" style="left:79px;top:450px;letter-spacing:0.125px">Marketing</div><div style="position:absolute;left:63px;top:470px;width:7px;height:7px;border:1px solid #808080;background:#fff"></div><div style="position:absolute;left:65px;top:474px;width:5px;height:1px;background:#000"></div><svg style="position:absolute;left:77px;top:466px" width="16" height="16" shape-rendering="crispEdges"><use href="#ou"/></svg><div class="t" style="left:98px;top:466px;letter-spacing:-0.25px">Sales</div><svg style="position:absolute;left:96px;top:482px" width="16" height="16" shape-rendering="crispEdges"><use href="#ou"/></svg><div class="t" style="left:117px;top:482px;letter-spacing:-0.091px">Inside Sales</div><svg style="position:absolute;left:96px;top:498px" width="16" height="16" shape-rendering="crispEdges"><use href="#ou"/></svg><div class="t" style="left:118px;top:498px;letter-spacing:-0.167px">Outside Sales</div><svg style="position:absolute;left:96px;top:514px" width="16" height="16" shape-rendering="crispEdges"><use href="#ou"/></svg><div class="t" style="left:117px;top:514px;letter-spacing:-0.154px">Sales Managers</div><svg style="position:absolute;left:39px;top:530px" width="16" height="16" shape-rendering="crispEdges"><use href="#ou"/></svg><div class="t" style="left:60px;top:530px;letter-spacing:0px">Domain Controllers</div><div style="position:absolute;left:132px;top:533px;width:1px;height:1px;background:#000"></div><div style="position:absolute;left:135px;top:533px;width:1px;height:1px;background:#000"></div></div></div><div style="position:absolute;left:344px;top:98px;width:16px;height:436px;background:#eae8e4"></div><div style="position:absolute;left:344px;top:98px;width:14px;height:14px;background:#d4d0c8;border:1px solid;border-color:#d4d0c8 #404040 #404040 #d4d0c8;box-shadow:inset 1px 1px #ffffff,inset -1px -1px #808080"></div><svg style="position:absolute;left:348px;top:104px" width="7" height="4" shape-rendering="crispEdges"><path d="M3 0h1v1h-1zM2 1h3v1h-3zM1 2h5v1h-5zM0 3h7v1h-7z"/></svg><div style="position:absolute;left:344px;top:151px;width:14px;height:329px;background:#d4d0c8;border:1px solid;border-color:#d4d0c8 #404040 #404040 #d4d0c8;box-shadow:inset 1px 1px #ffffff,inset -1px -1px #808080"></div><div style="position:absolute;left:344px;top:518px;width:14px;height:14px;background:#d4d0c8;border:1px solid;border-color:#d4d0c8 #404040 #404040 #d4d0c8;box-shadow:inset 1px 1px #ffffff,inset -1px -1px #808080"></div><svg style="position:absolute;left:348px;top:524px" width="7" height="4" shape-rendering="crispEdges"><path d="M0 0h7v1h-7zM1 1h5v1h-5zM2 2h3v1h-3zM3 3h1v1h-1z"/></svg><div style="position:absolute;left:2px;top:534px;width:342px;height:16px;background:#eae8e4"></div><div style="position:absolute;left:2px;top:534px;width:14px;height:14px;background:#d4d0c8;border:1px solid;border-color:#d4d0c8 #404040 #404040 #d4d0c8;box-shadow:inset 1px 1px #ffffff,inset -1px -1px #808080"></div><svg style="position:absolute;left:8px;top:538px" width="4" height="7" shape-rendering="crispEdges"><path d="M3 0h1v7h-1zM2 1h1v5h-1zM1 2h1v3h-1zM0 3h1v1h-1z"/></svg><div style="position:absolute;left:18px;top:534px;width:304px;height:14px;background:#d4d0c8;border:1px solid;border-color:#d4d0c8 #404040 #404040 #d4d0c8;box-shadow:inset 1px 1px #ffffff,inset -1px -1px #808080"></div><div style="position:absolute;left:328px;top:534px;width:14px;height:14px;background:#d4d0c8;border:1px solid;border-color:#d4d0c8 #404040 #404040 #d4d0c8;box-shadow:inset 1px 1px #ffffff,inset -1px -1px #808080"></div><svg style="position:absolute;left:334px;top:538px" width="4" height="7" shape-rendering="crispEdges"><path d="M0 0h1v7h-1zM1 1h1v5h-1zM2 2h1v3h-1zM3 3h1v1h-1z"/></svg><div style="position:absolute;left:344px;top:534px;width:16px;height:16px;background:#d4d0c8"></div><div style="position:absolute;left:362px;top:72px;width:438px;height:480px;background:#d4d0c8"></div><div style="position:absolute;left:365px;top:72px;width:435px;height:1px;background:#808080"></div><div style="position:absolute;left:365px;top:72px;width:1px;height:18px;background:#808080"></div><div style="position:absolute;left:365px;top:90px;width:435px;height:1px;background:#ffffff"></div><div class="t" style="left:371px;top:74px;">Engineering</div><div class="t" style="left:440px;top:74px;letter-spacing:0.12px">4 objects</div><div style="position:absolute;left:365px;top:91px;width:433px;height:459px;background:#fff;border:1px solid;border-color:#808080 #ffffff #ffffff #808080;box-shadow:inset 1px 1px #404040,inset -1px -1px #d4d0c8"></div><div style="position:absolute;left:367px;top:93px;width:431px;height:16px;background:#d4d0c8"></div><div style="position:absolute;left:367px;top:93px;width:98px;height:14px;background:#d4d0c8;border:1px solid;border-color:#d4d0c8 #404040 #404040 #d4d0c8;box-shadow:inset 1px 1px #ffffff,inset -1px -1px #808080"></div><div class="t" style="left:372px;top:94px;letter-spacing:-0.1px">Name</div><div style="position:absolute;left:467px;top:93px;width:98px;height:14px;background:#d4d0c8;border:1px solid;border-color:#d4d0c8 #404040 #404040 #d4d0c8;box-shadow:inset 1px 1px #ffffff,inset -1px -1px #808080"></div><div class="t" style="left:472px;top:94px;letter-spacing:-0.1px">Type</div><div style="position:absolute;left:567px;top:93px;width:148px;height:14px;background:#d4d0c8;border:1px solid;border-color:#d4d0c8 #404040 #404040 #d4d0c8;box-shadow:inset 1px 1px #ffffff,inset -1px -1px #808080"></div><div class="t" style="left:572px;top:94px;letter-spacing:-0.1px">Description</div><div style="position:absolute;left:717px;top:93px;width:88px;height:14px;background:#d4d0c8;border:1px solid;border-color:#d4d0c8 #404040 #404040 #d4d0c8;box-shadow:inset 1px 1px #ffffff,inset -1px -1px #808080"></div><div style="position:absolute;left:798px;top:92px;width:1px;height:459px;background:#d4d0c8"></div><div style="position:absolute;left:799px;top:91px;width:1px;height:461px;background:#ffffff"></div><svg style="position:absolute;left:368px;top:112px" width="16" height="16" shape-rendering="crispEdges"><use href="#ou"/></svg><div class="t" style="left:387px;top:113px;letter-spacing:0.0px">Consultants</div><div class="t" style="left:473px;top:113px;">Organizational <span style="letter-spacing:1px">..</span>.</div><svg style="position:absolute;left:368px;top:129px" width="16" height="16" shape-rendering="crispEdges"><use href="#ou"/></svg><div class="t" style="left:386px;top:130px;letter-spacing:0px">Engineering T<span style="letter-spacing:1px">..</span>.</div><div class="t" style="left:473px;top:130px;">Organizational <span style="letter-spacing:1px">..</span>.</div><svg style="position:absolute;left:368px;top:146px" width="16" height="16" shape-rendering="crispEdges"><use href="#ou"/></svg><div class="t" style="left:386px;top:147px;letter-spacing:0.0px">Engineers</div><div class="t" style="left:473px;top:147px;">Organizational <span style="letter-spacing:1px">..</span>.</div><svg style="position:absolute;left:368px;top:163px" width="16" height="16" shape-rendering="crispEdges"><use href="#ou"/></svg><div class="t" style="left:386px;top:164px;letter-spacing:0.5px">Interns</div><div class="t" style="left:473px;top:164px;">Organizational <span style="letter-spacing:1px">..</span>.</div><div style="position:absolute;left:0px;top:552px;width:800px;height:20px;background:#d4d0c8"></div><div style="position:absolute;left:0px;top:554px;width:580px;height:1px;background:#808080"></div><div style="position:absolute;left:0px;top:554px;width:1px;height:17px;background:#808080"></div><div style="position:absolute;left:0px;top:571px;width:580px;height:1px;background:#ffffff"></div><div style="position:absolute;left:579px;top:554px;width:1px;height:18px;background:#ffffff"></div><div style="position:absolute;left:582px;top:554px;width:131px;height:1px;background:#808080"></div><div style="position:absolute;left:582px;top:554px;width:1px;height:17px;background:#808080"></div><div style="position:absolute;left:582px;top:571px;width:131px;height:1px;background:#ffffff"></div><div style="position:absolute;left:712px;top:554px;width:1px;height:18px;background:#ffffff"></div><div style="position:absolute;left:715px;top:554px;width:83px;height:1px;background:#808080"></div><div style="position:absolute;left:715px;top:554px;width:1px;height:17px;background:#808080"></div><div style="position:absolute;left:715px;top:571px;width:83px;height:1px;background:#ffffff"></div><div style="position:absolute;left:797px;top:554px;width:1px;height:18px;background:#ffffff"></div><div style="position:absolute;left:0px;top:572px;width:800px;height:28px;background:#d4d0c8"></div><div style="position:absolute;left:0px;top:573px;width:800px;height:1px;background:#ffffff"></div><div style="position:absolute;left:2px;top:576px;width:53px;height:20px;background:#d4d0c8;border:1px solid;border-color:#ffffff #404040 #404040 #ffffff;box-shadow:inset -1px -1px #808080"></div><div style="position:absolute;left:4px;top:578px"><svg width="19" height="17" viewBox="0 0 19 17" shape-rendering="crispEdges" style="display:block"><rect x="11" y="2" width="4" height="1" fill="#000000"/><rect x="9" y="3" width="8" height="1" fill="#000000"/><rect x="2" y="4" width="1" height="1" fill="#000000"/><rect x="8" y="4" width="3" height="1" fill="#000000"/><rect x="11" y="4" width="1" height="1" fill="#ff0000"/><rect x="12" y="4" width="2" height="1" fill="#000000"/><rect x="14" y="4" width="1" height="1" fill="#00ff00"/><rect x="15" y="4" width="3" height="1" fill="#000000"/><rect x="2" y="5" width="1" height="1" fill="#000000"/><rect x="4" y="5" width="6" height="1" fill="#000000"/><rect x="10" y="5" width="2" height="1" fill="#ff0000"/><rect x="12" y="5" width="2" height="1" fill="#000000"/><rect x="14" y="5" width="2" height="1" fill="#00ff00"/><rect x="16" y="5" width="2" height="1" fill="#000000"/><rect x="4" y="6" width="1" height="1" fill="#000000"/><rect x="6" y="6" width="4" height="1" fill="#000000"/><rect x="10" y="6" width="2" height="1" fill="#ff0000"/><rect x="12" y="6" width="2" height="1" fill="#000000"/><rect x="14" y="6" width="2" height="1" fill="#00ff00"/><rect x="16" y="6" width="2" height="1" fill="#000000"/><rect x="2" y="7" width="1" height="1" fill="#ff0000"/><rect x="8" y="7" width="2" height="1" fill="#000000"/><rect x="10" y="7" width="2" height="1" fill="#ff0000"/><rect x="12" y="7" width="2" height="1" fill="#000000"/><rect x="14" y="7" width="2" height="1" fill="#00ff00"/><rect x="16" y="7" width="2" height="1" fill="#000000"/><rect x="2" y="8" width="1" height="1" fill="#ff0000"/><rect x="4" y="8" width="4" height="1" fill="#ff0000"/><rect x="8" y="8" width="2" height="1" fill="#000000"/><rect x="10" y="8" width="1" height="1" fill="#ff0000"/><rect x="11" y="8" width="4" height="1" fill="#000000"/><rect x="15" y="8" width="1" height="1" fill="#00ff00"/><rect x="16" y="8" width="2" height="1" fill="#000000"/><rect x="4" y="9" width="4" height="1" fill="#ff0000"/><rect x="8" y="9" width="10" height="1" fill="#000000"/><rect x="2" y="10" width="1" height="1" fill="#0000ff"/><rect x="8" y="10" width="2" height="1" fill="#000000"/><rect x="10" y="10" width="2" height="1" fill="#0000ff"/><rect x="12" y="10" width="2" height="1" fill="#000000"/><rect x="14" y="10" width="1" height="1" fill="#ffff00"/><rect x="15" y="10" width="3" height="1" fill="#000000"/><rect x="2" y="11" width="1" height="1" fill="#0000ff"/><rect x="4" y="11" width="4" height="1" fill="#0000ff"/><rect x="8" y="11" width="1" height="1" fill="#000000"/><rect x="9" y="11" width="2" height="1" fill="#0000ff"/><rect x="11" y="11" width="3" height="1" fill="#000000"/><rect x="14" y="11" width="2" height="1" fill="#ffff00"/><rect x="16" y="11" width="2" height="1" fill="#000000"/><rect x="4" y="12" width="4" height="1" fill="#0000ff"/><rect x="8" y="12" width="1" height="1" fill="#000000"/><rect x="9" y="12" width="3" height="1" fill="#0000ff"/><rect x="12" y="12" width="2" height="1" fill="#000000"/><rect x="14" y="12" width="2" height="1" fill="#ffff00"/><rect x="16" y="12" width="2" height="1" fill="#000000"/><rect x="2" y="13" width="1" height="1" fill="#000000"/><rect x="8" y="13" width="1" height="1" fill="#000000"/><rect x="9" y="13" width="2" height="1" fill="#0000ff"/><rect x="11" y="13" width="4" height="1" fill="#000000"/><rect x="15" y="13" width="1" height="1" fill="#ffff00"/><rect x="16" y="13" width="2" height="1" fill="#000000"/><rect x="2" y="14" width="1" height="1" fill="#000000"/><rect x="4" y="14" width="14" height="1" fill="#000000"/><rect x="4" y="15" width="1" height="1" fill="#000000"/><rect x="6" y="15" width="4" height="1" fill="#000000"/><rect x="14" y="15" width="4" height="1" fill="#000000"/><rect x="18" y="16" width="1" height="1" fill="#000000"/></svg></div><div class="t" style="left:24px;top:579px;font-weight:bold;font-size:11px;letter-spacing:0.65px;-webkit-text-stroke:0.3px #000">Start</div><div style="position:absolute;left:60px;top:576px;width:1px;height:22px;background:#808080"></div><div style="position:absolute;left:61px;top:576px;width:1px;height:22px;background:#ffffff"></div><div style="position:absolute;left:64px;top:578px;width:1px;height:17px;border-left:1px solid #ffffff;border-top:1px solid #ffffff;border-right:1px solid #808080;border-bottom:1px solid #808080"></div><div style="position:absolute;left:74px;top:581px"><svg width="16" height="14" viewBox="0 0 16 14" shape-rendering="crispEdges" style="display:block"><rect x="0" y="0" width="13" height="1" fill="#3088c8"/><rect x="13" y="0" width="2" height="1" fill="#ff0000"/><rect x="15" y="0" width="1" height="1" fill="#000000"/><rect x="0" y="1" width="1" height="1" fill="#3088c8"/><rect x="1" y="1" width="1" height="1" fill="#40c0f8"/><rect x="2" y="1" width="3" height="1" fill="#3088c8"/><rect x="5" y="1" width="6" height="1" fill="#f4f0c8"/><rect x="11" y="1" width="1" height="1" fill="#3088c8"/><rect x="12" y="1" width="1" height="1" fill="#f0a800"/><rect x="13" y="1" width="1" height="1" fill="#ff0000"/><rect x="14" y="1" width="1" height="1" fill="#3088c8"/><rect x="15" y="1" width="1" height="1" fill="#000000"/><rect x="0" y="2" width="3" height="1" fill="#3088c8"/><rect x="3" y="2" width="8" height="1" fill="#f4f0c8"/><rect x="11" y="2" width="2" height="1" fill="#f0a800"/><rect x="13" y="2" width="2" height="1" fill="#3088c8"/><rect x="15" y="2" width="1" height="1" fill="#000000"/><rect x="0" y="3" width="2" height="1" fill="#3088c8"/><rect x="2" y="3" width="2" height="1" fill="#f4f0c8"/><rect x="4" y="3" width="6" height="1" fill="#000000"/><rect x="10" y="3" width="2" height="1" fill="#f0a800"/><rect x="12" y="3" width="2" height="1" fill="#f4f0c8"/><rect x="14" y="3" width="1" height="1" fill="#3088c8"/><rect x="15" y="3" width="1" height="1" fill="#000000"/><rect x="0" y="4" width="1" height="1" fill="#3088c8"/><rect x="1" y="4" width="3" height="1" fill="#f4f0c8"/><rect x="4" y="4" width="1" height="1" fill="#000000"/><rect x="5" y="4" width="4" height="1" fill="#ffffff"/><rect x="9" y="4" width="2" height="1" fill="#f0a800"/><rect x="11" y="4" width="3" height="1" fill="#f4f0c8"/><rect x="14" y="4" width="1" height="1" fill="#3088c8"/><rect x="15" y="4" width="1" height="1" fill="#000000"/><rect x="0" y="5" width="1" height="1" fill="#3088c8"/><rect x="1" y="5" width="3" height="1" fill="#f4f0c8"/><rect x="4" y="5" width="1" height="1" fill="#000000"/><rect x="5" y="5" width="3" height="1" fill="#ffffff"/><rect x="8" y="5" width="2" height="1" fill="#f0a800"/><rect x="10" y="5" width="1" height="1" fill="#ffffff"/><rect x="11" y="5" width="3" height="1" fill="#f4f0c8"/><rect x="14" y="5" width="1" height="1" fill="#3088c8"/><rect x="15" y="5" width="1" height="1" fill="#000000"/><rect x="0" y="6" width="1" height="1" fill="#3088c8"/><rect x="1" y="6" width="3" height="1" fill="#f4f0c8"/><rect x="4" y="6" width="1" height="1" fill="#000000"/><rect x="5" y="6" width="2" height="1" fill="#ffffff"/><rect x="7" y="6" width="1" height="1" fill="#000000"/><rect x="8" y="6" width="1" height="1" fill="#f0a800"/><rect x="9" y="6" width="2" height="1" fill="#ffffff"/><rect x="11" y="6" width="3" height="1" fill="#f4f0c8"/><rect x="14" y="6" width="1" height="1" fill="#3088c8"/><rect x="15" y="6" width="1" height="1" fill="#000000"/><rect x="0" y="7" width="1" height="1" fill="#3088c8"/><rect x="1" y="7" width="3" height="1" fill="#f4f0c8"/><rect x="4" y="7" width="1" height="1" fill="#000000"/><rect x="5" y="7" width="5" height="1" fill="#ffffff"/><rect x="10" y="7" width="1" height="1" fill="#000000"/><rect x="11" y="7" width="3" height="1" fill="#f4f0c8"/><rect x="14" y="7" width="1" height="1" fill="#3088c8"/><rect x="15" y="7" width="1" height="1" fill="#000000"/><rect x="0" y="8" width="1" height="1" fill="#3088c8"/><rect x="1" y="8" width="3" height="1" fill="#f4f0c8"/><rect x="4" y="8" width="1" height="1" fill="#000000"/><rect x="5" y="8" width="5" height="1" fill="#ffffff"/><rect x="10" y="8" width="1" height="1" fill="#000000"/><rect x="11" y="8" width="3" height="1" fill="#f4f0c8"/><rect x="14" y="8" width="1" height="1" fill="#3088c8"/><rect x="15" y="8" width="1" height="1" fill="#000000"/><rect x="0" y="9" width="2" height="1" fill="#3088c8"/><rect x="2" y="9" width="2" height="1" fill="#f4f0c8"/><rect x="4" y="9" width="7" height="1" fill="#000000"/><rect x="11" y="9" width="2" height="1" fill="#f4f0c8"/><rect x="13" y="9" width="2" height="1" fill="#3088c8"/><rect x="15" y="9" width="1" height="1" fill="#000000"/><rect x="0" y="10" width="3" height="1" fill="#3088c8"/><rect x="3" y="10" width="9" height="1" fill="#f4f0c8"/><rect x="12" y="10" width="3" height="1" fill="#3088c8"/><rect x="15" y="10" width="1" height="1" fill="#000000"/><rect x="0" y="11" width="1" height="1" fill="#3088c8"/><rect x="1" y="11" width="1" height="1" fill="#40c0f8"/><rect x="2" y="11" width="3" height="1" fill="#3088c8"/><rect x="5" y="11" width="5" height="1" fill="#f4f0c8"/><rect x="10" y="11" width="3" height="1" fill="#3088c8"/><rect x="13" y="11" width="1" height="1" fill="#40c0f8"/><rect x="14" y="11" width="1" height="1" fill="#3088c8"/><rect x="15" y="11" width="1" height="1" fill="#000000"/><rect x="0" y="12" width="15" height="1" fill="#3088c8"/><rect x="15" y="12" width="1" height="1" fill="#000000"/><rect x="0" y="13" width="16" height="1" fill="#000000"/></svg></div><div style="position:absolute;left:97px;top:579px"><svg width="17" height="16" viewBox="0 0 17 16" shape-rendering="crispEdges" style="display:block"><rect x="11" y="0" width="5" height="1" fill="#1040d8"/><rect x="6" y="1" width="9" height="1" fill="#1040d8"/><rect x="16" y="1" width="1" height="1" fill="#1040d8"/><rect x="4" y="2" width="3" height="1" fill="#1040d8"/><rect x="7" y="2" width="5" height="1" fill="#40c0f8"/><rect x="12" y="2" width="3" height="1" fill="#1040d8"/><rect x="16" y="2" width="1" height="1" fill="#1040d8"/><rect x="3" y="3" width="2" height="1" fill="#1040d8"/><rect x="5" y="3" width="2" height="1" fill="#40c0f8"/><rect x="7" y="3" width="4" height="1" fill="#1040d8"/><rect x="11" y="3" width="2" height="1" fill="#40c0f8"/><rect x="13" y="3" width="4" height="1" fill="#1040d8"/><rect x="2" y="4" width="2" height="1" fill="#1040d8"/><rect x="4" y="4" width="1" height="1" fill="#40c0f8"/><rect x="5" y="4" width="2" height="1" fill="#1040d8"/><rect x="11" y="4" width="1" height="1" fill="#1040d8"/><rect x="12" y="4" width="2" height="1" fill="#40c0f8"/><rect x="14" y="4" width="2" height="1" fill="#1040d8"/><rect x="1" y="5" width="2" height="1" fill="#1040d8"/><rect x="3" y="5" width="1" height="1" fill="#40c0f8"/><rect x="4" y="5" width="2" height="1" fill="#1040d8"/><rect x="12" y="5" width="1" height="1" fill="#1040d8"/><rect x="13" y="5" width="2" height="1" fill="#40c0f8"/><rect x="15" y="5" width="1" height="1" fill="#1040d8"/><rect x="1" y="6" width="1" height="1" fill="#1040d8"/><rect x="2" y="6" width="1" height="1" fill="#40c0f8"/><rect x="3" y="6" width="11" height="1" fill="#1040d8"/><rect x="14" y="6" width="1" height="1" fill="#40c0f8"/><rect x="15" y="6" width="1" height="1" fill="#1040d8"/><rect x="0" y="7" width="2" height="1" fill="#1040d8"/><rect x="2" y="7" width="1" height="1" fill="#40c0f8"/><rect x="3" y="7" width="13" height="1" fill="#1040d8"/><rect x="0" y="8" width="4" height="1" fill="#1040d8"/><rect x="13" y="8" width="2" height="1" fill="#1040d8"/><rect x="0" y="9" width="4" height="1" fill="#1040d8"/><rect x="14" y="9" width="1" height="1" fill="#1040d8"/><rect x="1" y="10" width="4" height="1" fill="#1040d8"/><rect x="10" y="10" width="5" height="1" fill="#1040d8"/><rect x="1" y="11" width="5" height="1" fill="#1040d8"/><rect x="9" y="11" width="5" height="1" fill="#1040d8"/><rect x="2" y="12" width="11" height="1" fill="#1040d8"/><rect x="2" y="13" width="1" height="1" fill="#1040d8"/><rect x="4" y="13" width="8" height="1" fill="#1040d8"/><rect x="1" y="14" width="2" height="1" fill="#1040d8"/><rect x="7" y="14" width="3" height="1" fill="#1040d8"/><rect x="0" y="15" width="3" height="1" fill="#1040d8"/></svg></div><div style="position:absolute;left:120px;top:579px"><svg width="16" height="15" viewBox="0 0 16 15" shape-rendering="crispEdges" style="display:block"><rect x="7" y="0" width="4" height="1" fill="#40c0f8"/><rect x="5" y="1" width="3" height="1" fill="#40c0f8"/><rect x="8" y="1" width="4" height="1" fill="#1040d8"/><rect x="3" y="2" width="1" height="1" fill="#1040d8"/><rect x="4" y="2" width="2" height="1" fill="#40c0f8"/><rect x="6" y="2" width="2" height="1" fill="#1040d8"/><rect x="11" y="2" width="2" height="1" fill="#1040d8"/><rect x="0" y="3" width="3" height="1" fill="#000000"/><rect x="3" y="3" width="2" height="1" fill="#1040d8"/><rect x="5" y="3" width="1" height="1" fill="#40c0f8"/><rect x="6" y="3" width="10" height="1" fill="#000000"/><rect x="0" y="4" width="1" height="1" fill="#000000"/><rect x="1" y="4" width="2" height="1" fill="#f4f0c8"/><rect x="3" y="4" width="2" height="1" fill="#1040d8"/><rect x="5" y="4" width="1" height="1" fill="#40c0f8"/><rect x="6" y="4" width="2" height="1" fill="#1040d8"/><rect x="8" y="4" width="6" height="1" fill="#f4f0c8"/><rect x="14" y="4" width="1" height="1" fill="#ff0000"/><rect x="15" y="4" width="1" height="1" fill="#000000"/><rect x="0" y="5" width="1" height="1" fill="#000000"/><rect x="1" y="5" width="2" height="1" fill="#f4f0c8"/><rect x="3" y="5" width="5" height="1" fill="#1040d8"/><rect x="8" y="5" width="4" height="1" fill="#f4f0c8"/><rect x="12" y="5" width="2" height="1" fill="#ff0000"/><rect x="14" y="5" width="1" height="1" fill="#f4f0c8"/><rect x="15" y="5" width="1" height="1" fill="#000000"/><rect x="0" y="6" width="1" height="1" fill="#000000"/><rect x="1" y="6" width="14" height="1" fill="#f4f0c8"/><rect x="15" y="6" width="1" height="1" fill="#000000"/><rect x="0" y="7" width="1" height="1" fill="#000000"/><rect x="1" y="7" width="14" height="1" fill="#f4f0c8"/><rect x="15" y="7" width="1" height="1" fill="#000000"/><rect x="0" y="8" width="1" height="1" fill="#000000"/><rect x="1" y="8" width="10" height="1" fill="#f4f0c8"/><rect x="11" y="8" width="4" height="1" fill="#1040d8"/><rect x="15" y="8" width="1" height="1" fill="#000000"/><rect x="0" y="9" width="1" height="1" fill="#000000"/><rect x="1" y="9" width="10" height="1" fill="#f4f0c8"/><rect x="11" y="9" width="1" height="1" fill="#1040d8"/><rect x="12" y="9" width="2" height="1" fill="#40c0f8"/><rect x="14" y="9" width="1" height="1" fill="#1040d8"/><rect x="15" y="9" width="1" height="1" fill="#000000"/><rect x="0" y="10" width="1" height="1" fill="#000000"/><rect x="1" y="10" width="9" height="1" fill="#f4f0c8"/><rect x="10" y="10" width="2" height="1" fill="#40c0f8"/><rect x="12" y="10" width="3" height="1" fill="#1040d8"/><rect x="15" y="10" width="1" height="1" fill="#000000"/><rect x="0" y="11" width="1" height="1" fill="#000000"/><rect x="1" y="11" width="8" height="1" fill="#f4f0c8"/><rect x="9" y="11" width="2" height="1" fill="#40c0f8"/><rect x="11" y="11" width="1" height="1" fill="#1040d8"/><rect x="12" y="11" width="1" height="1" fill="#000000"/><rect x="13" y="11" width="2" height="1" fill="#f4f0c8"/><rect x="15" y="11" width="1" height="1" fill="#000000"/><rect x="0" y="12" width="5" height="1" fill="#000000"/><rect x="5" y="12" width="2" height="1" fill="#1040d8"/><rect x="7" y="12" width="1" height="1" fill="#000000"/><rect x="8" y="12" width="2" height="1" fill="#40c0f8"/><rect x="10" y="12" width="2" height="1" fill="#1040d8"/><rect x="12" y="12" width="4" height="1" fill="#000000"/><rect x="5" y="13" width="2" height="1" fill="#1040d8"/><rect x="7" y="13" width="3" height="1" fill="#40c0f8"/><rect x="10" y="13" width="2" height="1" fill="#1040d8"/><rect x="6" y="14" width="5" height="1" fill="#1040d8"/></svg></div><div style="position:absolute;left:144px;top:576px;width:1px;height:22px;background:#808080"></div><div style="position:absolute;left:145px;top:576px;width:1px;height:22px;background:#ffffff"></div><div style="position:absolute;left:148px;top:578px;width:1px;height:17px;border-left:1px solid #ffffff;border-top:1px solid #ffffff;border-right:1px solid #808080;border-bottom:1px solid #808080"></div><div style="position:absolute;left:155px;top:576px;width:158px;height:20px;background:#eae8e4;border-top:1px solid #404040;border-left:1px solid #404040;border-right:1px solid #ffffff;border-bottom:1px solid #ffffff;box-shadow:inset 1px 1px #808080"></div><div style="position:absolute;left:159px;top:580px"><svg width="16" height="16" viewBox="0 0 16 16" shape-rendering="crispEdges" style="display:block"><rect x="10" y="0" width="4" height="1" fill="#808080"/><rect x="14" y="0" width="1" height="1" fill="#000000"/><rect x="7" y="1" width="3" height="1" fill="#808080"/><rect x="10" y="1" width="3" height="1" fill="#c0c0c0"/><rect x="13" y="1" width="1" height="1" fill="#808080"/><rect x="14" y="1" width="1" height="1" fill="#000000"/><rect x="6" y="2" width="1" height="1" fill="#808080"/><rect x="7" y="2" width="4" height="1" fill="#c0c0c0"/><rect x="11" y="2" width="1" height="1" fill="#ffffff"/><rect x="12" y="2" width="1" height="1" fill="#c0c0c0"/><rect x="13" y="2" width="1" height="1" fill="#808080"/><rect x="14" y="2" width="1" height="1" fill="#000000"/><rect x="5" y="3" width="1" height="1" fill="#808080"/><rect x="6" y="3" width="4" height="1" fill="#c0c0c0"/><rect x="10" y="3" width="2" height="1" fill="#ffffff"/><rect x="12" y="3" width="1" height="1" fill="#808080"/><rect x="13" y="3" width="1" height="1" fill="#000000"/><rect x="4" y="4" width="1" height="1" fill="#808080"/><rect x="5" y="4" width="3" height="1" fill="#c0c0c0"/><rect x="8" y="4" width="2" height="1" fill="#ffffff"/><rect x="10" y="4" width="1" height="1" fill="#c0c0c0"/><rect x="11" y="4" width="1" height="1" fill="#808080"/><rect x="12" y="4" width="1" height="1" fill="#000000"/><rect x="13" y="4" width="1" height="1" fill="#c8c8d8"/><rect x="14" y="4" width="1" height="1" fill="#ffffff"/><rect x="3" y="5" width="1" height="1" fill="#808080"/><rect x="4" y="5" width="2" height="1" fill="#c0c0c0"/><rect x="6" y="5" width="2" height="1" fill="#ffffff"/><rect x="8" y="5" width="2" height="1" fill="#c0c0c0"/><rect x="10" y="5" width="1" height="1" fill="#808080"/><rect x="11" y="5" width="1" height="1" fill="#000000"/><rect x="12" y="5" width="1" height="1" fill="#c8c8d8"/><rect x="13" y="5" width="1" height="1" fill="#ffff00"/><rect x="14" y="5" width="1" height="1" fill="#c8c8d8"/><rect x="15" y="5" width="1" height="1" fill="#000000"/><rect x="2" y="6" width="1" height="1" fill="#808080"/><rect x="3" y="6" width="1" height="1" fill="#c0c0c0"/><rect x="4" y="6" width="2" height="1" fill="#ffffff"/><rect x="6" y="6" width="3" height="1" fill="#c0c0c0"/><rect x="9" y="6" width="1" height="1" fill="#000000"/><rect x="12" y="6" width="1" height="1" fill="#ffff00"/><rect x="13" y="6" width="1" height="1" fill="#ffffff"/><rect x="14" y="6" width="1" height="1" fill="#c8c8d8"/><rect x="15" y="6" width="1" height="1" fill="#000000"/><rect x="1" y="7" width="1" height="1" fill="#808080"/><rect x="2" y="7" width="2" height="1" fill="#ffffff"/><rect x="4" y="7" width="4" height="1" fill="#c0c0c0"/><rect x="8" y="7" width="1" height="1" fill="#000000"/><rect x="11" y="7" width="1" height="1" fill="#ffff00"/><rect x="12" y="7" width="1" height="1" fill="#c8c8d8"/><rect x="13" y="7" width="1" height="1" fill="#ffffff"/><rect x="14" y="7" width="1" height="1" fill="#c8c8d8"/><rect x="15" y="7" width="1" height="1" fill="#000000"/><rect x="1" y="8" width="7" height="1" fill="#000000"/><rect x="8" y="8" width="2" height="1" fill="#ffffff"/><rect x="10" y="8" width="2" height="1" fill="#ffff00"/><rect x="12" y="8" width="1" height="1" fill="#ffffff"/><rect x="13" y="8" width="1" height="1" fill="#000000"/><rect x="14" y="8" width="1" height="1" fill="#c8c8d8"/><rect x="15" y="8" width="1" height="1" fill="#000000"/><rect x="0" y="9" width="1" height="1" fill="#808080"/><rect x="1" y="9" width="1" height="1" fill="#ffff00"/><rect x="2" y="9" width="1" height="1" fill="#ffffff"/><rect x="3" y="9" width="1" height="1" fill="#c8c8d8"/><rect x="4" y="9" width="1" height="1" fill="#ffffff"/><rect x="5" y="9" width="1" height="1" fill="#c8c8d8"/><rect x="6" y="9" width="1" height="1" fill="#ffff00"/><rect x="7" y="9" width="1" height="1" fill="#c8c8d8"/><rect x="8" y="9" width="2" height="1" fill="#ffffff"/><rect x="10" y="9" width="1" height="1" fill="#ffff00"/><rect x="11" y="9" width="1" height="1" fill="#ffffff"/><rect x="12" y="9" width="1" height="1" fill="#000000"/><rect x="13" y="9" width="1" height="1" fill="#ffffff"/><rect x="14" y="9" width="2" height="1" fill="#000000"/><rect x="0" y="10" width="1" height="1" fill="#000000"/><rect x="1" y="10" width="3" height="1" fill="#ffff00"/><rect x="4" y="10" width="1" height="1" fill="#ffffff"/><rect x="5" y="10" width="1" height="1" fill="#000000"/><rect x="6" y="10" width="2" height="1" fill="#c8c8d8"/><rect x="8" y="10" width="1" height="1" fill="#ffff00"/><rect x="9" y="10" width="2" height="1" fill="#ffffff"/><rect x="11" y="10" width="1" height="1" fill="#000000"/><rect x="12" y="10" width="1" height="1" fill="#ffffff"/><rect x="13" y="10" width="2" height="1" fill="#c8c8d8"/><rect x="15" y="10" width="1" height="1" fill="#000000"/><rect x="1" y="11" width="1" height="1" fill="#000000"/><rect x="2" y="11" width="3" height="1" fill="#ffff00"/><rect x="5" y="11" width="1" height="1" fill="#ffffff"/><rect x="6" y="11" width="1" height="1" fill="#000000"/><rect x="7" y="11" width="1" height="1" fill="#c8c8d8"/><rect x="8" y="11" width="2" height="1" fill="#ffffff"/><rect x="10" y="11" width="1" height="1" fill="#000000"/><rect x="11" y="11" width="2" height="1" fill="#ffffff"/><rect x="13" y="11" width="1" height="1" fill="#c8c8d8"/><rect x="14" y="11" width="1" height="1" fill="#000000"/><rect x="2" y="12" width="2" height="1" fill="#000000"/><rect x="4" y="12" width="2" height="1" fill="#ffffff"/><rect x="6" y="12" width="2" height="1" fill="#ffff00"/><rect x="8" y="12" width="1" height="1" fill="#000000"/><rect x="9" y="12" width="1" height="1" fill="#ffffff"/><rect x="10" y="12" width="1" height="1" fill="#000000"/><rect x="11" y="12" width="2" height="1" fill="#ffffff"/><rect x="13" y="12" width="1" height="1" fill="#000000"/><rect x="4" y="13" width="2" height="1" fill="#000000"/><rect x="6" y="13" width="2" height="1" fill="#ffffff"/><rect x="8" y="13" width="1" height="1" fill="#000000"/><rect x="9" y="13" width="2" height="1" fill="#ffffff"/><rect x="11" y="13" width="2" height="1" fill="#000000"/><rect x="6" y="14" width="2" height="1" fill="#000000"/><rect x="8" y="14" width="1" height="1" fill="#ffffff"/><rect x="9" y="14" width="2" height="1" fill="#000000"/><rect x="9" y="15" width="2" height="1" fill="#000000"/></svg></div><div class="t" style="left:177px;top:580px;font-weight:bold;font-size:11px;letter-spacing:0.36px;-webkit-text-stroke:0.2px #000">Active Directory Users...</div><div style="position:absolute;left:704px;top:576px;width:92px;height:20px;background:#d4d0c8;border-style:solid;border-width:1px 0 0 1px;border-color:#808080;box-shadow:1px 1px #ffffff"></div><div style="position:absolute;left:708px;top:580px"><svg width="16" height="14" viewBox="0 0 16 14" shape-rendering="crispEdges" style="display:block"><rect x="8" y="0" width="7" height="1" fill="#000000"/><rect x="7" y="1" width="9" height="1" fill="#000000"/><rect x="7" y="2" width="2" height="1" fill="#000000"/><rect x="9" y="2" width="1" height="1" fill="#ffffff"/><rect x="10" y="2" width="4" height="1" fill="#000000"/><rect x="14" y="2" width="1" height="1" fill="#c0c0c0"/><rect x="15" y="2" width="1" height="1" fill="#000000"/><rect x="1" y="3" width="13" height="1" fill="#000000"/><rect x="14" y="3" width="1" height="1" fill="#c0c0c0"/><rect x="15" y="3" width="1" height="1" fill="#000000"/><rect x="1" y="4" width="13" height="1" fill="#000000"/><rect x="14" y="4" width="1" height="1" fill="#c0c0c0"/><rect x="15" y="4" width="1" height="1" fill="#000000"/><rect x="1" y="5" width="13" height="1" fill="#000000"/><rect x="14" y="5" width="1" height="1" fill="#c0c0c0"/><rect x="15" y="5" width="1" height="1" fill="#000000"/><rect x="1" y="6" width="2" height="1" fill="#000000"/><rect x="3" y="6" width="1" height="1" fill="#ffffff"/><rect x="4" y="6" width="10" height="1" fill="#000000"/><rect x="14" y="6" width="1" height="1" fill="#c0c0c0"/><rect x="15" y="6" width="1" height="1" fill="#000000"/><rect x="1" y="7" width="2" height="1" fill="#000000"/><rect x="3" y="7" width="1" height="1" fill="#ffffff"/><rect x="4" y="7" width="6" height="1" fill="#000000"/><rect x="10" y="7" width="4" height="1" fill="#ffffff"/><rect x="14" y="7" width="1" height="1" fill="#c0c0c0"/><rect x="15" y="7" width="1" height="1" fill="#000000"/><rect x="1" y="8" width="9" height="1" fill="#000000"/><rect x="10" y="8" width="4" height="1" fill="#c0c0c0"/><rect x="14" y="8" width="1" height="1" fill="#000000"/><rect x="1" y="9" width="15" height="1" fill="#000000"/><rect x="1" y="10" width="1" height="1" fill="#000000"/><rect x="2" y="10" width="9" height="1" fill="#c0c0c0"/><rect x="11" y="10" width="1" height="1" fill="#000000"/><rect x="0" y="11" width="1" height="1" fill="#000000"/><rect x="1" y="11" width="10" height="1" fill="#c0c0c0"/><rect x="11" y="11" width="1" height="1" fill="#000000"/><rect x="1" y="12" width="11" height="1" fill="#000000"/><rect x="1" y="13" width="10" height="1" fill="#000000"/></svg></div><div class="t" style="left:741px;top:580px;letter-spacing:0.2px">7:57 AM</div><div style="position:absolute;left:2px;top:1px"><svg width="16" height="16" viewBox="0 0 16 16" shape-rendering="crispEdges" style="display:block"><rect x="10" y="0" width="4" height="1" fill="#808080"/><rect x="14" y="0" width="1" height="1" fill="#000000"/><rect x="7" y="1" width="3" height="1" fill="#808080"/><rect x="10" y="1" width="3" height="1" fill="#c0c0c0"/><rect x="13" y="1" width="1" height="1" fill="#808080"/><rect x="14" y="1" width="1" height="1" fill="#000000"/><rect x="6" y="2" width="1" height="1" fill="#808080"/><rect x="7" y="2" width="4" height="1" fill="#c0c0c0"/><rect x="11" y="2" width="1" height="1" fill="#ffffff"/><rect x="12" y="2" width="1" height="1" fill="#c0c0c0"/><rect x="13" y="2" width="1" height="1" fill="#808080"/><rect x="14" y="2" width="1" height="1" fill="#000000"/><rect x="5" y="3" width="1" height="1" fill="#808080"/><rect x="6" y="3" width="4" height="1" fill="#c0c0c0"/><rect x="10" y="3" width="2" height="1" fill="#ffffff"/><rect x="12" y="3" width="1" height="1" fill="#808080"/><rect x="13" y="3" width="1" height="1" fill="#000000"/><rect x="4" y="4" width="1" height="1" fill="#808080"/><rect x="5" y="4" width="3" height="1" fill="#c0c0c0"/><rect x="8" y="4" width="2" height="1" fill="#ffffff"/><rect x="10" y="4" width="1" height="1" fill="#c0c0c0"/><rect x="11" y="4" width="1" height="1" fill="#808080"/><rect x="12" y="4" width="1" height="1" fill="#000000"/><rect x="13" y="4" width="1" height="1" fill="#c8c8d8"/><rect x="14" y="4" width="1" height="1" fill="#ffffff"/><rect x="3" y="5" width="1" height="1" fill="#808080"/><rect x="4" y="5" width="2" height="1" fill="#c0c0c0"/><rect x="6" y="5" width="2" height="1" fill="#ffffff"/><rect x="8" y="5" width="2" height="1" fill="#c0c0c0"/><rect x="10" y="5" width="1" height="1" fill="#808080"/><rect x="11" y="5" width="1" height="1" fill="#000000"/><rect x="12" y="5" width="1" height="1" fill="#c8c8d8"/><rect x="13" y="5" width="1" height="1" fill="#ffff00"/><rect x="14" y="5" width="1" height="1" fill="#c8c8d8"/><rect x="15" y="5" width="1" height="1" fill="#000000"/><rect x="2" y="6" width="1" height="1" fill="#808080"/><rect x="3" y="6" width="1" height="1" fill="#c0c0c0"/><rect x="4" y="6" width="2" height="1" fill="#ffffff"/><rect x="6" y="6" width="3" height="1" fill="#c0c0c0"/><rect x="9" y="6" width="1" height="1" fill="#000000"/><rect x="12" y="6" width="1" height="1" fill="#ffff00"/><rect x="13" y="6" width="1" height="1" fill="#ffffff"/><rect x="14" y="6" width="1" height="1" fill="#c8c8d8"/><rect x="15" y="6" width="1" height="1" fill="#000000"/><rect x="1" y="7" width="1" height="1" fill="#808080"/><rect x="2" y="7" width="2" height="1" fill="#ffffff"/><rect x="4" y="7" width="4" height="1" fill="#c0c0c0"/><rect x="8" y="7" width="1" height="1" fill="#000000"/><rect x="11" y="7" width="1" height="1" fill="#ffff00"/><rect x="12" y="7" width="1" height="1" fill="#c8c8d8"/><rect x="13" y="7" width="1" height="1" fill="#ffffff"/><rect x="14" y="7" width="1" height="1" fill="#c8c8d8"/><rect x="15" y="7" width="1" height="1" fill="#000000"/><rect x="1" y="8" width="7" height="1" fill="#000000"/><rect x="8" y="8" width="2" height="1" fill="#ffffff"/><rect x="10" y="8" width="2" height="1" fill="#ffff00"/><rect x="12" y="8" width="1" height="1" fill="#ffffff"/><rect x="13" y="8" width="1" height="1" fill="#000000"/><rect x="14" y="8" width="1" height="1" fill="#c8c8d8"/><rect x="15" y="8" width="1" height="1" fill="#000000"/><rect x="0" y="9" width="1" height="1" fill="#808080"/><rect x="1" y="9" width="1" height="1" fill="#ffff00"/><rect x="2" y="9" width="1" height="1" fill="#ffffff"/><rect x="3" y="9" width="1" height="1" fill="#c8c8d8"/><rect x="4" y="9" width="1" height="1" fill="#ffffff"/><rect x="5" y="9" width="1" height="1" fill="#c8c8d8"/><rect x="6" y="9" width="1" height="1" fill="#ffff00"/><rect x="7" y="9" width="1" height="1" fill="#c8c8d8"/><rect x="8" y="9" width="2" height="1" fill="#ffffff"/><rect x="10" y="9" width="1" height="1" fill="#ffff00"/><rect x="11" y="9" width="1" height="1" fill="#ffffff"/><rect x="12" y="9" width="1" height="1" fill="#000000"/><rect x="13" y="9" width="1" height="1" fill="#ffffff"/><rect x="14" y="9" width="2" height="1" fill="#000000"/><rect x="0" y="10" width="1" height="1" fill="#000000"/><rect x="1" y="10" width="3" height="1" fill="#ffff00"/><rect x="4" y="10" width="1" height="1" fill="#ffffff"/><rect x="5" y="10" width="1" height="1" fill="#000000"/><rect x="6" y="10" width="2" height="1" fill="#c8c8d8"/><rect x="8" y="10" width="1" height="1" fill="#ffff00"/><rect x="9" y="10" width="2" height="1" fill="#ffffff"/><rect x="11" y="10" width="1" height="1" fill="#000000"/><rect x="12" y="10" width="1" height="1" fill="#ffffff"/><rect x="13" y="10" width="2" height="1" fill="#c8c8d8"/><rect x="15" y="10" width="1" height="1" fill="#000000"/><rect x="1" y="11" width="1" height="1" fill="#000000"/><rect x="2" y="11" width="3" height="1" fill="#ffff00"/><rect x="5" y="11" width="1" height="1" fill="#ffffff"/><rect x="6" y="11" width="1" height="1" fill="#000000"/><rect x="7" y="11" width="1" height="1" fill="#c8c8d8"/><rect x="8" y="11" width="2" height="1" fill="#ffffff"/><rect x="10" y="11" width="1" height="1" fill="#000000"/><rect x="11" y="11" width="2" height="1" fill="#ffffff"/><rect x="13" y="11" width="1" height="1" fill="#c8c8d8"/><rect x="14" y="11" width="1" height="1" fill="#000000"/><rect x="2" y="12" width="2" height="1" fill="#000000"/><rect x="4" y="12" width="2" height="1" fill="#ffffff"/><rect x="6" y="12" width="2" height="1" fill="#ffff00"/><rect x="8" y="12" width="1" height="1" fill="#000000"/><rect x="9" y="12" width="1" height="1" fill="#ffffff"/><rect x="10" y="12" width="1" height="1" fill="#000000"/><rect x="11" y="12" width="2" height="1" fill="#ffffff"/><rect x="13" y="12" width="1" height="1" fill="#000000"/><rect x="4" y="13" width="2" height="1" fill="#000000"/><rect x="6" y="13" width="2" height="1" fill="#ffffff"/><rect x="8" y="13" width="1" height="1" fill="#000000"/><rect x="9" y="13" width="2" height="1" fill="#ffffff"/><rect x="11" y="13" width="2" height="1" fill="#000000"/><rect x="6" y="14" width="2" height="1" fill="#000000"/><rect x="8" y="14" width="1" height="1" fill="#ffffff"/><rect x="9" y="14" width="2" height="1" fill="#000000"/><rect x="9" y="15" width="2" height="1" fill="#000000"/></svg></div><div style="position:absolute;left:11px;top:23px"><svg width="16" height="16" viewBox="0 0 16 16" shape-rendering="crispEdges" style="display:block"><rect x="10" y="0" width="4" height="1" fill="#808080"/><rect x="14" y="0" width="1" height="1" fill="#000000"/><rect x="7" y="1" width="3" height="1" fill="#808080"/><rect x="10" y="1" width="3" height="1" fill="#c0c0c0"/><rect x="13" y="1" width="1" height="1" fill="#808080"/><rect x="14" y="1" width="1" height="1" fill="#000000"/><rect x="6" y="2" width="1" height="1" fill="#808080"/><rect x="7" y="2" width="4" height="1" fill="#c0c0c0"/><rect x="11" y="2" width="1" height="1" fill="#ffffff"/><rect x="12" y="2" width="1" height="1" fill="#c0c0c0"/><rect x="13" y="2" width="1" height="1" fill="#808080"/><rect x="14" y="2" width="1" height="1" fill="#000000"/><rect x="5" y="3" width="1" height="1" fill="#808080"/><rect x="6" y="3" width="4" height="1" fill="#c0c0c0"/><rect x="10" y="3" width="2" height="1" fill="#ffffff"/><rect x="12" y="3" width="1" height="1" fill="#808080"/><rect x="13" y="3" width="1" height="1" fill="#000000"/><rect x="4" y="4" width="1" height="1" fill="#808080"/><rect x="5" y="4" width="3" height="1" fill="#c0c0c0"/><rect x="8" y="4" width="2" height="1" fill="#ffffff"/><rect x="10" y="4" width="1" height="1" fill="#c0c0c0"/><rect x="11" y="4" width="1" height="1" fill="#808080"/><rect x="12" y="4" width="1" height="1" fill="#000000"/><rect x="13" y="4" width="1" height="1" fill="#c8c8d8"/><rect x="14" y="4" width="1" height="1" fill="#ffffff"/><rect x="3" y="5" width="1" height="1" fill="#808080"/><rect x="4" y="5" width="2" height="1" fill="#c0c0c0"/><rect x="6" y="5" width="2" height="1" fill="#ffffff"/><rect x="8" y="5" width="2" height="1" fill="#c0c0c0"/><rect x="10" y="5" width="1" height="1" fill="#808080"/><rect x="11" y="5" width="1" height="1" fill="#000000"/><rect x="12" y="5" width="1" height="1" fill="#c8c8d8"/><rect x="13" y="5" width="1" height="1" fill="#ffff00"/><rect x="14" y="5" width="1" height="1" fill="#c8c8d8"/><rect x="15" y="5" width="1" height="1" fill="#000000"/><rect x="2" y="6" width="1" height="1" fill="#808080"/><rect x="3" y="6" width="1" height="1" fill="#c0c0c0"/><rect x="4" y="6" width="2" height="1" fill="#ffffff"/><rect x="6" y="6" width="3" height="1" fill="#c0c0c0"/><rect x="9" y="6" width="1" height="1" fill="#000000"/><rect x="12" y="6" width="1" height="1" fill="#ffff00"/><rect x="13" y="6" width="1" height="1" fill="#ffffff"/><rect x="14" y="6" width="1" height="1" fill="#c8c8d8"/><rect x="15" y="6" width="1" height="1" fill="#000000"/><rect x="1" y="7" width="1" height="1" fill="#808080"/><rect x="2" y="7" width="2" height="1" fill="#ffffff"/><rect x="4" y="7" width="4" height="1" fill="#c0c0c0"/><rect x="8" y="7" width="1" height="1" fill="#000000"/><rect x="11" y="7" width="1" height="1" fill="#ffff00"/><rect x="12" y="7" width="1" height="1" fill="#c8c8d8"/><rect x="13" y="7" width="1" height="1" fill="#ffffff"/><rect x="14" y="7" width="1" height="1" fill="#c8c8d8"/><rect x="15" y="7" width="1" height="1" fill="#000000"/><rect x="1" y="8" width="7" height="1" fill="#000000"/><rect x="8" y="8" width="2" height="1" fill="#ffffff"/><rect x="10" y="8" width="2" height="1" fill="#ffff00"/><rect x="12" y="8" width="1" height="1" fill="#ffffff"/><rect x="13" y="8" width="1" height="1" fill="#000000"/><rect x="14" y="8" width="1" height="1" fill="#c8c8d8"/><rect x="15" y="8" width="1" height="1" fill="#000000"/><rect x="0" y="9" width="1" height="1" fill="#808080"/><rect x="1" y="9" width="1" height="1" fill="#ffff00"/><rect x="2" y="9" width="1" height="1" fill="#ffffff"/><rect x="3" y="9" width="1" height="1" fill="#c8c8d8"/><rect x="4" y="9" width="1" height="1" fill="#ffffff"/><rect x="5" y="9" width="1" height="1" fill="#c8c8d8"/><rect x="6" y="9" width="1" height="1" fill="#ffff00"/><rect x="7" y="9" width="1" height="1" fill="#c8c8d8"/><rect x="8" y="9" width="2" height="1" fill="#ffffff"/><rect x="10" y="9" width="1" height="1" fill="#ffff00"/><rect x="11" y="9" width="1" height="1" fill="#ffffff"/><rect x="12" y="9" width="1" height="1" fill="#000000"/><rect x="13" y="9" width="1" height="1" fill="#ffffff"/><rect x="14" y="9" width="2" height="1" fill="#000000"/><rect x="0" y="10" width="1" height="1" fill="#000000"/><rect x="1" y="10" width="3" height="1" fill="#ffff00"/><rect x="4" y="10" width="1" height="1" fill="#ffffff"/><rect x="5" y="10" width="1" height="1" fill="#000000"/><rect x="6" y="10" width="2" height="1" fill="#c8c8d8"/><rect x="8" y="10" width="1" height="1" fill="#ffff00"/><rect x="9" y="10" width="2" height="1" fill="#ffffff"/><rect x="11" y="10" width="1" height="1" fill="#000000"/><rect x="12" y="10" width="1" height="1" fill="#ffffff"/><rect x="13" y="10" width="2" height="1" fill="#c8c8d8"/><rect x="15" y="10" width="1" height="1" fill="#000000"/><rect x="1" y="11" width="1" height="1" fill="#000000"/><rect x="2" y="11" width="3" height="1" fill="#ffff00"/><rect x="5" y="11" width="1" height="1" fill="#ffffff"/><rect x="6" y="11" width="1" height="1" fill="#000000"/><rect x="7" y="11" width="1" height="1" fill="#c8c8d8"/><rect x="8" y="11" width="2" height="1" fill="#ffffff"/><rect x="10" y="11" width="1" height="1" fill="#000000"/><rect x="11" y="11" width="2" height="1" fill="#ffffff"/><rect x="13" y="11" width="1" height="1" fill="#c8c8d8"/><rect x="14" y="11" width="1" height="1" fill="#000000"/><rect x="2" y="12" width="2" height="1" fill="#000000"/><rect x="4" y="12" width="2" height="1" fill="#ffffff"/><rect x="6" y="12" width="2" height="1" fill="#ffff00"/><rect x="8" y="12" width="1" height="1" fill="#000000"/><rect x="9" y="12" width="1" height="1" fill="#ffffff"/><rect x="10" y="12" width="1" height="1" fill="#000000"/><rect x="11" y="12" width="2" height="1" fill="#ffffff"/><rect x="13" y="12" width="1" height="1" fill="#000000"/><rect x="4" y="13" width="2" height="1" fill="#000000"/><rect x="6" y="13" width="2" height="1" fill="#ffffff"/><rect x="8" y="13" width="1" height="1" fill="#000000"/><rect x="9" y="13" width="2" height="1" fill="#ffffff"/><rect x="11" y="13" width="2" height="1" fill="#000000"/><rect x="6" y="14" width="2" height="1" fill="#000000"/><rect x="8" y="14" width="1" height="1" fill="#ffffff"/><rect x="9" y="14" width="2" height="1" fill="#000000"/><rect x="9" y="15" width="2" height="1" fill="#000000"/></svg></div>
</body></html>
